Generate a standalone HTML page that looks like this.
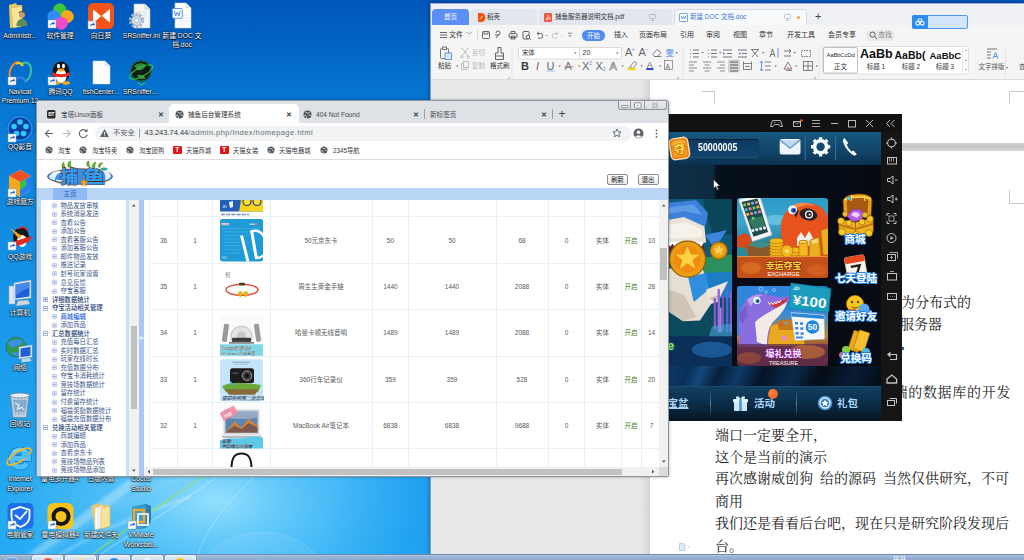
<!DOCTYPE html>
<html><head><meta charset="utf-8">
<style>
*{box-sizing:border-box;margin:0;padding:0}
html,body{width:1024px;height:560px;overflow:hidden}
body{position:relative;font-family:"Liberation Sans","Noto Sans CJK SC",sans-serif;background:#1a7fdc}
.abs{position:absolute}
svg{display:block;overflow:visible}
#desk{position:absolute;left:0;top:0;width:1024px;height:560px;overflow:hidden;
background:linear-gradient(180deg,#0056ba 0px,#0676d2 100px,#0f88de 200px,#1896e8 310px,#21a4f0 430px,#27acf3 560px);}
.ico{position:absolute;width:60px;margin-left:-30px;text-align:center;color:#fff;font-size:6.8px;line-height:9.6px;text-shadow:0 0 1.5px #000,0 .5px 1px rgba(0,0,0,.9),0 0 2px rgba(0,0,0,.6);white-space:nowrap}
.mi{top:25px;line-height:12px;font-size:7px;color:#333;white-space:nowrap}
.rt{line-height:10px;font-size:6.5px;color:#333;white-space:nowrap}
.doc{font-family:"Liberation Serif","Noto Serif CJK SC",serif;font-size:14px;line-height:20px;color:#222;white-space:nowrap;letter-spacing:0px;word-spacing:3.5px}
.gb{font-size:10.5px;font-weight:bold;color:#a9d6f7;line-height:14px;white-space:nowrap}
.tb{font-size:6.6px;line-height:12px;color:#45494e;white-space:nowrap}
.tx{font-size:6.5px;line-height:12px;color:#3c4043;font-weight:bold;width:8px;text-align:center}
.bm{font-size:6.3px;line-height:12px;color:#3c4043;white-space:nowrap}
.nv{font-size:6.35px;line-height:10px;white-space:nowrap}
.td{font-size:6.5px;line-height:10px;white-space:nowrap}
.c{transform:translateX(-50%)}
</style></head><body>
<div id="desk">
<svg class="abs" style="left:0;top:0" width="1024" height="560" viewBox="0 0 1024 560">
 <defs><radialGradient id="glow" cx="50%" cy="50%" r="50%"><stop offset="0" stop-color="#b0eeff" stop-opacity=".8"/><stop offset=".5" stop-color="#84daff" stop-opacity=".45"/><stop offset="1" stop-color="#7fd8ff" stop-opacity="0"/></radialGradient>
 <radialGradient id="glow2" cx="50%" cy="50%" r="50%"><stop offset="0" stop-color="#0f86ea" stop-opacity=".3"/><stop offset="1" stop-color="#0f86ea" stop-opacity="0"/></radialGradient></defs>
 <ellipse cx="215" cy="500" rx="210" ry="120" fill="url(#glow)"/>
 <ellipse cx="440" cy="530" rx="120" ry="90" fill="url(#glow2)"/>
 <circle cx="262" cy="610" r="78" fill="#ffffff" opacity=".07"/><circle cx="262" cy="610" r="78" fill="none" stroke="#fff" stroke-width="1" opacity=".12"/>
 <defs><filter id="bl" x="-20%" y="-20%" width="140%" height="140%"><feGaussianBlur stdDeviation="1.600"/></filter></defs>
 <g filter="url(#bl)"><path d="M20 560L32 560 140 484 128 480z" fill="#fff" opacity=".3"/><path d="M40 560C80 520 140 490 200 470" stroke="#ffffff" stroke-width="9" fill="none" opacity=".07"/>
 <path d="M52 560C90 535 135 515 190 497" stroke="#fff" stroke-width="2" fill="none" opacity=".4"/></g>
 <path d="M85 560C108 543 152 510 202 477" stroke="#8fdc5a" stroke-width="1.300" fill="none" opacity=".85"/>
 <path d="M92 560C130 533 175 508 218 476" stroke="#e8f8ff" stroke-width="1.200" fill="none" opacity=".35"/>
 <path d="M196 560C205 530 228 500 258 474" stroke="#d8f4ff" stroke-width="1.200" fill="none" opacity=".3"/>
</svg>
<svg class="abs" style="left:0;top:0" width="200" height="100" viewBox="0 0 200 100">
<path d="M9 5l7-2 1 2h5v21l-12 2z" fill="#e9c769"/><path d="M11 8l11-2v20l-9 2z" fill="#f7e39a" stroke="#d4ad48" stroke-width=".5"/><circle cx="22" cy="15" r="3" fill="#c99a6a"/><path d="M16.500 26c0-5 2.500-7 5.500-7s5.500 2 5.500 7z" fill="#5f8a5a"/><path d="M19 13c1-2 5-2 6 0" stroke="#6a4a2a" stroke-width="1.200" fill="none"/>
<g><rect x="53.500" y="3.500" width="12.500" height="12.500" rx="5.500" fill="#3fc83a" transform="rotate(45 59.800 9.800)"/><rect x="61" y="10.300" width="12.500" height="12.500" rx="5.500" fill="#f7a81e" transform="rotate(45 67.300 16.600)"/><rect x="47.500" y="10.300" width="12.500" height="12.500" rx="5.500" fill="#2f8cf4" transform="rotate(45 53.800 16.600)"/><rect x="55" y="17" width="12.500" height="12.500" rx="5.500" fill="#f04ac8" transform="rotate(45 61.300 23.300)"/></g><g transform="translate(48,20)"><rect x="0" y="0" width="8" height="8" fill="#fff" stroke="#7f9fc8" stroke-width=".5"/><path d="M2 6c0-2.500 1.500-3.500 3.500-3.500V1.200L7 3.200 5.500 5.200V4C4 4 3 4.500 2 6z" fill="#2a5fc8"/></g>
<rect x="88" y="3" width="26" height="26" rx="5" fill="#f2541b"/><path d="M93 9l8.500 7-8.500 7zM110 9l-8.500 7 8.500 7z" fill="#fff"/><path d="M93 9l17 14" stroke="#f2541b" stroke-width=".8"/><g transform="translate(88,21)"><rect x="0" y="0" width="8" height="8" fill="#fff" stroke="#7f9fc8" stroke-width=".5"/><path d="M2 6c0-2.500 1.500-3.500 3.500-3.500V1.200L7 3.200 5.500 5.200V4C4 4 3 4.500 2 6z" fill="#2a5fc8"/></g>
<path d="M134 4h11l5 5v19h-16z" fill="#f4f6f8" stroke="#b8c0c8" stroke-width=".6"/><path d="M145 4v5h5" fill="#dfe4ea" stroke="#b8c0c8" stroke-width=".5"/><path d="M137 12h10M137 15h10M137 18h10" stroke="#d0d6dc" stroke-width=".7"/><circle cx="136.500" cy="20.500" r="6.300" fill="none" stroke="#a8b6c6" stroke-width="2.800" stroke-dasharray="2.400 1.560"/><circle cx="136.500" cy="20.500" r="5" fill="#d4dde8" stroke="#93a3b6" stroke-width=".8"/><circle cx="136.500" cy="20.500" r="2.200" fill="#f4f6f8" stroke="#93a3b6" stroke-width=".6"/>
<path d="M175 3h11l5 5v20h-16z" fill="#fdfdfd" stroke="#c8ccd2" stroke-width=".6"/><path d="M186 3v5h5" fill="#e4e7ec" stroke="#c8ccd2" stroke-width=".5"/><path d="M178 15h10M178 18h10M178 21h10M178 24h7" stroke="#d8dce2" stroke-width=".7"/><rect x="172.300" y="8.500" width="10" height="9.800" rx="1.200" fill="#fff" stroke="#4a8af0" stroke-width=".9"/><path d="M174.300 11l1.400 5 1.600-4 1.600 4 1.400-5" stroke="#4a8af0" stroke-width="1" fill="none"/>
<path d="M14 82c-6-2-6-12 0-18 3-3 7-2 7 2" stroke="#f08a2a" stroke-width="2" fill="none"/><path d="M21 66c2-6 10-4 10 4 0 6-3 10-6 12" stroke="#3ac0a0" stroke-width="2" fill="none"/><path d="M13 82c4-6 10-6 13 0" stroke="#3a7fe0" stroke-width="2" fill="none"/><path d="M16 64c3-2 6-1 7 2" stroke="#e8d020" stroke-width="2" fill="none"/><g transform="translate(8,77)"><rect x="0" y="0" width="8" height="8" fill="#fff" stroke="#7f9fc8" stroke-width=".5"/><path d="M2 6c0-2.500 1.500-3.500 3.500-3.500V1.200L7 3.200 5.500 5.200V4C4 4 3 4.500 2 6z" fill="#2a5fc8"/></g>
<ellipse cx="61" cy="72" rx="8.500" ry="10.500" fill="#141414"/><ellipse cx="61" cy="76" rx="5.500" ry="7" fill="#fff"/><ellipse cx="58.500" cy="66" rx="1.500" ry="2.200" fill="#fff"/><ellipse cx="63.500" cy="66" rx="1.500" ry="2.200" fill="#fff"/><ellipse cx="61" cy="70" rx="3.500" ry="1.400" fill="#f5a81c"/><path d="M53 72c4 3 12 3 16 0l1 3c-5 3-13 3-18 0z" fill="#e8261c"/><ellipse cx="56" cy="83" rx="4" ry="1.800" fill="#f5a81c"/><ellipse cx="66" cy="83" rx="4" ry="1.800" fill="#f5a81c"/><g transform="translate(48,77)"><rect x="0" y="0" width="8" height="8" fill="#fff" stroke="#7f9fc8" stroke-width=".5"/><path d="M2 6c0-2.500 1.500-3.500 3.500-3.500V1.200L7 3.200 5.500 5.200V4C4 4 3 4.500 2 6z" fill="#2a5fc8"/></g>
<path d="M93 61h12l5 5v18H93z" fill="#fdfdfd" stroke="#cfd4da" stroke-width=".5"/><path d="M105 61v5h5" fill="#e8ebef" stroke="#cfd4da" stroke-width=".5"/>
<circle cx="141" cy="71" r="10.500" fill="#0e1c12"/><circle cx="141" cy="71" r="10" fill="none" stroke="#2a6a34" stroke-width="1"/><path d="M134 66c3-3 8-4 12-1-1 4-5 6-8 5zM137 75c3-1 7 0 9 3-3 2-7 2-9-3z" fill="#2f8a3a"/><ellipse cx="141" cy="72" rx="13" ry="4.500" fill="none" stroke="#34c844" stroke-width="1" transform="rotate(-28 141 72)"/><path d="M138 82l3 3 4-2" stroke="#3ad04a" stroke-width="1" fill="none"/>
</svg>
<div class="ico" style="left:20px;top:30.7px">Administr...</div>
<div class="ico" style="left:60px;top:30.7px">软件管理</div>
<div class="ico" style="left:101px;top:30.7px">向日葵</div>
<div class="ico" style="left:141.5px;top:30.7px">SRSniffer.ini</div>
<div class="ico" style="left:182px;top:30.7px">新建 DOC 文</div>
<div class="ico" style="left:182px;top:40.3px">档.doc</div>
<div class="ico" style="left:20px;top:86.5px">Navicat</div>
<div class="ico" style="left:20px;top:96.1px">Premium 12</div>
<div class="ico" style="left:60.5px;top:86.5px">腾讯QQ</div>
<div class="ico" style="left:101px;top:86.5px">fishCenter...</div>
<div class="ico" style="left:141px;top:86.5px">SRSniffer....</div>
<svg class="abs" style="left:0;top:100px" width="40" height="440" viewBox="0 0 40 440">
<circle cx="20" cy="28.500" r="13.500" fill="#1c8ff0" stroke="#0a5fc0" stroke-width="1"/><circle cx="20" cy="28.500" r="11" fill="#0a3f9a"/><g fill="#2ec8ff"><circle cx="20" cy="22" r="2.800"/><circle cx="14" cy="26.500" r="2.800"/><circle cx="26" cy="26.500" r="2.800"/><circle cx="16.500" cy="33.500" r="2.800"/><circle cx="23.500" cy="33.500" r="2.800"/></g><g transform="translate(8,34)"><rect x="0" y="0" width="8" height="8" fill="#fff" stroke="#7f9fc8" stroke-width=".5"/><path d="M2 6c0-2.500 1.500-3.500 3.500-3.500V1.200L7 3.200 5.500 5.200V4C4 4 3 4.500 2 6z" fill="#2a5fc8"/></g>
<path d="M20 70l11 6v14l-11 7-11-7V76z" fill="#f5f5f5"/><path d="M20 70l11 6-11 6-11-6z" fill="#f0501e"/><path d="M9 76l11 6v15l-11-7z" fill="#f5a81c"/><path d="M31 76l-11 6v15l11-7z" fill="#2a7fe8"/><path d="M20 82l6-3v7l-6 4z" fill="#3ac04a"/><g transform="translate(8,89)"><rect x="0" y="0" width="8" height="8" fill="#fff" stroke="#7f9fc8" stroke-width=".5"/><path d="M2 6c0-2.500 1.500-3.500 3.500-3.500V1.200L7 3.200 5.500 5.200V4C4 4 3 4.500 2 6z" fill="#2a5fc8"/></g>
<ellipse cx="21" cy="137" rx="8" ry="9.500" fill="#161616"/><ellipse cx="22" cy="141" rx="5" ry="6" fill="#fff"/><path d="M10 128l12 8-3 3z" fill="#f5a81c"/><path d="M12 142l20-6-2 5-12 5z" fill="#e8261c"/><path d="M18 129c4-3 8-2 10 2" stroke="#e8261c" stroke-width="1.500" fill="none"/><g transform="translate(8,142)"><rect x="0" y="0" width="8" height="8" fill="#fff" stroke="#7f9fc8" stroke-width=".5"/><path d="M2 6c0-2.500 1.500-3.500 3.500-3.500V1.200L7 3.200 5.500 5.200V4C4 4 3 4.500 2 6z" fill="#2a5fc8"/></g>
<rect x="9" y="186" width="6" height="18" fill="#dfe5ec" stroke="#9aa6b4" stroke-width=".5"/><path d="M14 183l17-3v18l-17 2z" fill="#e8edf3" stroke="#9aa6b4" stroke-width=".5"/><path d="M15.500 184.500l14-2.500v14.500l-14 2z" fill="#1f5fd8"/><path d="M15.500 184.500l14-2.500v6c-5 1-10 4-14 8z" fill="#5a9af0" opacity=".7"/><path d="M18 201l10-1 2 4-14 2z" fill="#cfd6de" stroke="#9aa6b4" stroke-width=".5"/>
<circle cx="16" cy="247" r="10" fill="#2f9a4a"/><path d="M8 243c4-4 10-5 15-2-2 5-8 7-12 6zM12 253c3-2 8-1 10 2-3 2-8 2-10-2z" fill="#3a8fe0"/><circle cx="16" cy="247" r="10" fill="none" stroke="#1f6a8a" stroke-width=".8"/><path d="M19 247l13-2v12l-13 2z" fill="#e8edf3" stroke="#9aa6b4" stroke-width=".5"/><path d="M20.500 248.500l10-1.800v9l-10 1.600z" fill="#1f5fd8"/><path d="M22 259l8-1 1.500 3-10 1.500z" fill="#cfd6de"/>
<path d="M10.500 296h18.500l-2.500 21.500h-13.500z" fill="#c9d6e2" stroke="#6f8296" stroke-width=".8" opacity=".95"/><path d="M13 300h14l-1.500 12h-11z" fill="#5a8fd0" opacity=".55"/><path d="M14.500 299l1.300 16M18 299l.5 16M21.500 299l-.5 16M25 299l-1.300 16" stroke="#8a9cb0" stroke-width=".8"/><ellipse cx="19.800" cy="295.500" rx="9.800" ry="2.400" fill="#e8eef4" stroke="#6f8296" stroke-width=".8"/><path d="M15 303l4 2-1.500 4 4.500-1.500 2.500 3" stroke="#fff" stroke-width="1.100" fill="none" opacity=".85"/>
<path d="M26.960 363.400A8.500 8.500 0 1 1 28.500 358.500H12" fill="none" stroke="#1670cc" stroke-width="6.600"/><path d="M26.960 363.400A8.500 8.500 0 1 1 28.500 358.500H12" fill="none" stroke="#4fc0fb" stroke-width="5.200"/><path d="M13 352.500a8.500 8.500 0 0 1 12-1" fill="none" stroke="#8fdcff" stroke-width="2" opacity=".8"/><ellipse cx="19" cy="356.500" rx="13.500" ry="5" fill="none" stroke="#f5b820" stroke-width="1.800" transform="rotate(-32 19 356.500)"/><path d="M22 353.500A8.500 8.500 0 0 1 28.500 358.500" fill="none" stroke="#4fc0fb" stroke-width="5.200"/>
<rect x="7.500" y="403" width="26" height="26" rx="5" fill="#1f6fe8"/><path d="M20.500 407l9 3v7c0 5-4 8-9 10-5-2-9-5-9-10v-7z" fill="none" stroke="#fff" stroke-width="1.800"/><path d="M15 415l5 4 7-8" stroke="#fff" stroke-width="1.800" fill="none"/><g transform="translate(8,421)"><rect x="0" y="0" width="8" height="8" fill="#fff" stroke="#7f9fc8" stroke-width=".5"/><path d="M2 6c0-2.500 1.500-3.500 3.500-3.500V1.200L7 3.200 5.500 5.200V4C4 4 3 4.500 2 6z" fill="#2a5fc8"/></g>
</svg>
<div class="ico" style="left:20px;top:141.7px">QQ影音</div>
<div class="ico" style="left:20px;top:197.2px">游戏魔方</div>
<div class="ico" style="left:20px;top:252.2px">QQ游戏</div>
<div class="ico" style="left:20px;top:307.7px">计算机</div>
<div class="ico" style="left:20px;top:363.2px">网络</div>
<div class="ico" style="left:20px;top:419.2px">回收站</div>
<div class="ico" style="left:20px;top:474.2px">Internet</div>
<div class="ico" style="left:20px;top:483.8px">Explorer</div>
<div class="ico" style="left:20px;top:530.2px">电脑管家</div>
<div class="ico" style="left:60px;top:474.2px">雷电多开器4</div>
<div class="ico" style="left:101px;top:474.2px">日版内置</div>
<div class="ico" style="left:141px;top:474.2px">Cocos</div>
<div class="ico" style="left:141px;top:483.8px">Studio</div>
<svg class="abs" style="left:40px;top:495px" width="130" height="40" viewBox="0 0 130 40">
<rect x="7.500" y="8" width="26" height="26" rx="6" fill="#f7c21a"/><circle cx="21" cy="21.500" r="7.500" fill="none" stroke="#161616" stroke-width="4"/><path d="M22.500 17l-4 5h3l-1.500 4.500 4.500-5.500h-3z" fill="#f7c21a"/><path d="M10 31l7-6" stroke="#161616" stroke-width="3.600"/><g transform="translate(8,26)"><rect x="0" y="0" width="8" height="8" fill="#fff" stroke="#7f9fc8" stroke-width=".5"/><path d="M2 6c0-2.500 1.500-3.500 3.500-3.500V1.200L7 3.200 5.500 5.200V4C4 4 3 4.500 2 6z" fill="#2a5fc8"/></g>
<path d="M51 11l8-3 2 2h8v22l-14 3z" fill="#e9c769"/><path d="M55 13l5-1v21l-5 2z" fill="#fbfbfb" stroke="#ccc" stroke-width=".4"/><path d="M58 12l5-1v21l-5 2z" fill="#f4f4f4" stroke="#ccc" stroke-width=".4"/><path d="M61 13l9-2v20l-9 3z" fill="#f7e39a" stroke="#d4ad48" stroke-width=".5"/>
<path d="M92 12l14-3 5 2v16l-5 6-14 2z" fill="#2a7fb8"/><path d="M92 12l14-2v22l-14 3z" fill="#3a9ad8"/><rect x="94" y="15" width="10" height="12" fill="none" stroke="#f5a81c" stroke-width="2.400"/><rect x="98" y="19" width="10" height="11" fill="none" stroke="#e8e8e8" stroke-width="2"/><g transform="translate(88,26)"><rect x="0" y="0" width="8" height="8" fill="#fff" stroke="#7f9fc8" stroke-width=".5"/><path d="M2 6c0-2.500 1.500-3.500 3.500-3.500V1.200L7 3.200 5.500 5.200V4C4 4 3 4.500 2 6z" fill="#2a5fc8"/></g>
</svg>
<div class="ico" style="left:60.5px;top:530.2px">雷电模拟器4</div>
<div class="ico" style="left:101px;top:530.2px">新建文件夹</div>
<div class="ico" style="left:141px;top:530.2px">VMware</div>
<div class="ico" style="left:141px;top:539.8px">Workstati...</div>
</div>
<div id="wps" class="abs" style="left:430px;top:3px;width:594px;height:551px;background:#f4f5f6;border-left:1px solid #8aa0c8;border-top:1px solid #9fb4d8;box-shadow:0 0 4px rgba(0,10,60,.55);overflow:hidden;font-size:7.3px;color:#333">
 <!-- title/tab bar -->
 <div class="abs" style="left:0;top:0;width:594px;height:21px;background:#eef0f3"></div>
 <div class="abs" style="left:1px;top:5px;width:37px;height:16px;background:#5b8ff5;border-radius:4px 4px 0 0;color:#fff;text-align:center;line-height:16px;font-size:6.5px">首页</div>
 <div class="abs" style="left:40px;top:5px;width:66px;height:16px;background:#e2e6ee;border-radius:4px 4px 0 0"></div>
 <svg class="abs" style="left:46px;top:9px" width="8" height="9" viewBox="0 0 8 9"><path d="M1 0h3.5a3.5 4 0 0 1 0 9H1z" fill="#f4510b"/><path d="M2.6 6.2c1-.2 2.2-1.6 2.3-3" stroke="#fff" stroke-width=".9" fill="none"/></svg>
 <div class="abs" style="left:56px;top:5px;line-height:16px;font-size:6.5px;color:#333">稻壳</div>
 <div class="abs" style="left:108px;top:5px;width:133px;height:16px;background:#e2e6ee;border-radius:4px 4px 0 0"></div>
 <div class="abs" style="left:113px;top:9px;width:8px;height:9px;background:#f0593e;border-radius:1px"></div>
 <svg class="abs" style="left:114px;top:10px" width="6" height="7" viewBox="0 0 6 7"><path d="M1 6c1-1 2-3 2-5 1 2 1.5 3 2.5 3.5C4 4.8 2 5.2 1 6z" stroke="#fff" stroke-width=".7" fill="none"/></svg>
 <div class="abs" style="left:124px;top:5px;line-height:16px;font-size:6.5px;color:#333">捕鱼服务器说明文档.pdf</div>
 <svg class="abs" style="left:218px;top:10px" width="7" height="7" viewBox="0 0 7 7"><rect x=".5" y=".5" width="6" height="4" rx="1" fill="none" stroke="#aab" stroke-width=".7"/><path d="M3.5 4.5v2M2 6.5h3" stroke="#aab" stroke-width=".7"/></svg>
 <div class="abs" style="left:243px;top:5px;width:133px;height:17px;background:#f8f9fa;border-radius:4px 4px 0 0;border:1px solid #d5d9e2;border-bottom:none"></div>
 <svg class="abs" style="left:248px;top:9px" width="9" height="9" viewBox="0 0 9 9"><rect x=".5" y=".5" width="8" height="8" rx="1" fill="#fff" stroke="#4a86e8" stroke-width=".8"/><path d="M2.3 3l.9 3 1.3-2.6L5.8 6l.9-3" stroke="#4a86e8" stroke-width=".8" fill="none"/></svg>
 <div class="abs" style="left:259px;top:5px;line-height:16px;font-size:6.5px;color:#3c78d8">新建 DOC 文档.doc</div>
 <svg class="abs" style="left:353px;top:10px" width="7" height="7" viewBox="0 0 7 7"><rect x=".5" y=".5" width="6" height="4" rx="1" fill="none" stroke="#aab" stroke-width=".7"/><path d="M3.5 4.5v2M2 6.5h3" stroke="#aab" stroke-width=".7"/></svg>
 <div class="abs" style="left:366px;top:12px;width:3px;height:3px;border-radius:2px;background:#f5a142"></div>
 <div class="abs" style="left:384px;top:4px;line-height:16px;font-size:11px;color:#444">+</div>
 <!-- menu row -->
 <div class="abs" style="left:0;top:21px;width:594px;height:55px;background:#f5f5f6"></div>
 <svg class="abs" style="left:9px;top:28px" width="7" height="6" viewBox="0 0 7 6"><path d="M0 .5h7M0 3h7M0 5.500h7" stroke="#444" stroke-width=".8"/></svg><div class="abs mi" style="left:18px">文件</div><div class="abs mi" style="left:35px;font-size:6px;color:#777">﹀</div>
 <div class="abs" style="left:46px;top:25px;width:1px;height:12px;background:#ddd"></div>
 <svg class="abs" style="left:50px;top:26px" width="100" height="11" viewBox="0 0 100 11" fill="none" stroke="#555" stroke-width=".9">
  <rect x="1.5" y="1.5" width="7" height="7" rx="1"/><path d="M3 1.5v2.5h4V1.5"/>
  <path d="M15 8l2-3a2 2 0 1 0-2-2M14 5h4"/>
  <rect x="28" y="3.5" width="8" height="4" rx="1.5"/><path d="M30 3.500V1.500h4v2M30 6h4v3h-4z"/>
  <rect x="42" y="1.500" width="6" height="7.500" rx=".8"/><circle cx="47" cy="7" r="1.800" fill="#f5f5f6"/><path d="M48.300 8.300l1.500 1.500"/>
  <path d="M56 3.500h3.500a2.300 2.300 0 0 1 0 4.600H57M57.800 1.800L56 3.500l1.800 1.700"/><path d="M64.500 5l1 1 1-1" stroke-width=".6"/>
  <path d="M77 3.500h-3.500a2.300 2.300 0 0 0 0 4.600H76M75.200 1.800L77 3.500l-1.800 1.700" stroke="#bbb"/><path d="M80.500 5l1 1 1-1" stroke-width=".6" stroke="#bbb"/>
  <path d="M87 3.200h4M87.700 5l1.300 1.500L90.300 5" stroke-width=".7"/>
 </svg>
 <div class="abs" style="left:151px;top:26px;width:23px;height:11px;background:#4e8af0;border-radius:6px;color:#fff;text-align:center;line-height:11px;font-size:6.5px">开始</div>
 <div class="abs mi c" style="left:190px">插入</div><div class="abs mi c" style="left:222px">页面布局</div><div class="abs mi c" style="left:256px">引用</div><div class="abs mi c" style="left:282px">审阅</div><div class="abs mi c" style="left:309px">视图</div><div class="abs mi c" style="left:335px">章节</div><div class="abs mi c" style="left:370px">开发工具</div><div class="abs mi c" style="left:411px">会员专享</div>
 <div class="abs" style="left:435px;top:26px;width:28px;height:11px;background:#e8e9ea;border-radius:6px"></div>
 <svg class="abs" style="left:438px;top:27px" width="9" height="9" viewBox="0 0 9 9"><circle cx="3.600" cy="3.600" r="2.600" fill="none" stroke="#555" stroke-width=".9"/><path d="M5.600 5.600l2.400 2.400" stroke="#555" stroke-width="1"/></svg>
 <div class="abs mi" style="left:447px;color:#888">查找</div>

 <!-- cloud button -->
 <div class="abs" style="left:481px;top:11px;width:56px;height:14px;background:#d2e5fb;border:1px solid #4a9af0;border-radius:2px"></div>
 <div class="abs" style="left:481px;top:11px;width:16px;height:14px;background:#2d8cf0;border-radius:2px 0 0 2px"></div>
 <svg class="abs" style="left:484px;top:14px" width="10" height="8" viewBox="0 0 10 8"><circle cx="5" cy="2.600" r="1.900" fill="none" stroke="#fff" stroke-width="1.100"/><circle cx="2.800" cy="5.200" r="1.900" fill="none" stroke="#fff" stroke-width="1.100"/><circle cx="7.200" cy="5.200" r="1.900" fill="none" stroke="#fff" stroke-width="1.100"/></svg>
 <!-- ribbon -->
 <svg class="abs" style="left:0;top:40px" width="594" height="38" viewBox="0 0 594 38" fill="none" stroke="#555" stroke-width=".9">
  <!-- paste -->
  <rect x="9.500" y="4.500" width="8" height="10" rx="1" stroke="#666"/><rect x="11.500" y="3" width="4" height="2.500" fill="#f5f5f6" stroke="#666"/><rect x="14" y="9" width="6.500" height="6.500" fill="#dbe8fb" stroke="#5b8fd8"/>
  <!-- scissors -->
  <path d="M31 4l6 8M37 4l-6 8" stroke="#bbb"/><circle cx="30.800" cy="13" r="1.200" stroke="#bbb"/><circle cx="37.200" cy="13" r="1.200" stroke="#bbb"/>
  <!-- copy -->
  <rect x="30.500" y="19.500" width="5" height="6" stroke="#bbb"/><rect x="32.500" y="17.500" width="5" height="6" stroke="#bbb" fill="#f5f5f6"/>
  <!-- format brush -->
  <path d="M67 3.500h3v5.500h2.500v3h-8v-3H67zM64.500 12v3.500h8V12" stroke="#555"/>
  <path d="M81 4v30" stroke="#e2e2e2"/>
  <!-- font boxes -->
  <rect x="87.500" y="3.500" width="61" height="11.500" rx="1.500" fill="#fff" stroke="#d6d6d6"/><rect x="148.500" y="3.500" width="42" height="11.500" rx="1.500" fill="#fff" stroke="#d6d6d6"/>
  <path d="M143 8.500l1.300 1.500 1.300-1.500zM185 8.500l1.300 1.500 1.300-1.500z" fill="#666" stroke="none"/>
  <!-- eraser -->
  <path d="M221.500 10.500l4.500-5 4 3-3.500 4h-3zM223.500 12.500h7" stroke="#666" stroke-width=".8"/>
  <g transform="translate(0,-5)">
  <!-- underline bits -->
  <path d="M115.500 32h8" stroke="#8fb4ee"/><path d="M133 27.800h9.500" stroke="#e05a5a" stroke-width=".7"/>
  <!-- highlight -->
  <path d="M199 27.500l4.500-5 2.500 2-4.500 5zM197.500 29h3" stroke="#666" stroke-width=".8"/><rect x="196.400" y="28.800" width="8.300" height="2.400" fill="#ecd91a" stroke="none"/>
  <rect x="215.300" y="29.100" width="7.200" height="1.900" fill="#2a3bd6" stroke="none"/>
  <rect x="233.500" y="21.500" width="8" height="9" stroke="#777" stroke-width=".7"/>
  </g>
  <path d="M252 4v30" stroke="#e2e2e2"/>
  <path d="M78.500 32.500v2.500h-2.500M247.500 32.500v2.500h-2.500M384.500 32.500v2.500h-2.500" stroke="#999" stroke-width=".6"/>
  <!-- list icons row1 -->
  <g stroke="#555" stroke-width=".8">
   <path d="M262 6h6M262 9.500h6M262 13h6"/><path d="M259 6h1M259 9.500h1M259 13h1" stroke="#4a86e8" stroke-width="1.200"/>
   <path d="M280 6h6M280 9.500h6M280 13h6"/><path d="M277 6h1M277 9.500h1M277 13h1" stroke="#4a86e8" stroke-width="1.200"/>
   <path d="M292 6h9M296 9.500h5M292 13h9"/><path d="M292 8l2 1.500-2 1.500z" fill="#4a86e8" stroke="none"/>
   <path d="M307 6h9M311 9.500h5M307 13h9"/><path d="M309.500 8l-2 1.500 2 1.500z" fill="#4a86e8" stroke="none"/>
   <path d="M321 13l6-7M327 13l-6-7M320 5.500h8"/>
   <path d="M339 13l2.500-8 2.500 8M340 10.500h3"/><path d="M347 4v10" stroke="#4a86e8"/>
   <path d="M353 7h7M358 5l2 2-2 2M360 12h-7"/>
   <rect x="370.500" y="6.500" width="9" height="6" stroke-dasharray="1.500 1"/>
   </g><g stroke="#666" stroke-width=".7" transform="translate(0,-5)">
   <!-- row2 align -->
   <path d="M258 23h8M258 26h5M258 29h8M258 32h5"/>
   <path d="M272 23h8M273.500 26h5M272 29h8M273.500 32h5"/>
   <path d="M286 23h8M289 26h5M286 29h8M289 32h5"/>
  </g>
  <rect x="297" y="15.500" width="12" height="13" rx="1.500" fill="#d4d4d4" stroke="none"/>
  <g stroke="#444" stroke-width=".8" transform="translate(0,-5)"><path d="M299 23h8M299 26h8M299 29h8M299 32h8"/></g>
  <g stroke="#666" stroke-width=".8" transform="translate(0,-5)"><rect x="312.500" y="24.500" width="8" height="6"/><path d="M312.500 22.500v2M320.500 22.500v2M314 27.500h5"/>
   <path d="M334 23h6M334 27h6M334 31h6"/><path d="M330.500 22v10M329 24l1.500-2 1.500 2M329 30l1.500 2 1.500-2" stroke="#4a86e8"/>
   <path d="M353 30l4-7 4 7zM355 31.500h6" /><path d="M356 27.500l3 3" stroke="#d33"/>
   <rect x="372.500" y="22.500" width="9" height="9"/><path d="M377 22.500v9M372.500 27h9"/>
  </g>
  <g fill="#666" stroke="none"><path d="M270.500 8l1.200 1.400 1.200-1.400zM288 8l1.200 1.400 1.200-1.400zM331 8l1.200 1.400 1.200-1.400zM362.500 8l1.200 1.400 1.200-1.400zM343.500 21.500l1.200 1.400 1.200-1.400zM364 21.500l1.200 1.400 1.200-1.400zM384.500 21.500l1.200 1.400 1.200-1.400zM25 21.500l1.200 1.400 1.200-1.400zM244.500 8l1.200 1.400 1.200-1.400zM127.500 21.500l1.200 1.400 1.200-1.400zM147 21.500l1.200 1.400 1.200-1.400zM190.500 21.500l1.200 1.400 1.200-1.400zM209.500 21.500l1.200 1.400 1.200-1.400zM228 21.500l1.200 1.400 1.200-1.400z"/></g>
  <path d="M388 4v30" stroke="#e2e2e2"/>
  <!-- styles -->
  <rect x="391.500" y="2.500" width="146" height="27.500" rx="1.500" fill="#fff" stroke="#dcdcdc"/>
  <rect x="392.500" y="3.500" width="34" height="25.500" rx="1.500" fill="#fff" stroke="#b9b9b9"/>
  <path d="M534 7l1 -1.200 1 1.200zM534 16l1 1.200 1-1.200zM534 25l1 1.200 1-1.200z" fill="#777" stroke="none"/>
  <path d="M531.500 3v26" stroke="#e6e6e6"/>
  <!-- text layout icon -->
  <path d="M556 5h10M556 8h4M556 11h4M556 14h4" stroke="#666"/><path d="M562 14.500l2.500-6 2.500 6M563 12.500h3" stroke="#4a86e8"/>
 </svg>
 <div class="abs rt" style="left:7px;top:57px">粘贴</div>
 <div class="abs rt" style="left:41px;top:43.500px;color:#b5b5b5">剪切</div>
 <div class="abs rt" style="left:41px;top:57px;color:#b5b5b5">复制</div>
 <div class="abs rt" style="left:59px;top:57px">格式刷</div>
 <div class="abs rt" style="left:91px;top:43.500px;font-size:6.300px">宋体</div>
 <div class="abs rt" style="left:151.500px;top:43.500px;font-size:7px">20</div>
 <div class="abs rt" style="left:194px;top:43.400px;font-size:11px;color:#666">A<span style="font-size:5px;position:relative;top:-5.500px;left:-.5px;color:#4a86e8">+</span></div>
 <div class="abs rt" style="left:207.500px;top:43.400px;font-size:11px;color:#666">A<span style="font-size:5px;position:relative;top:-5.500px;left:-.5px;color:#4a86e8">–</span></div>
 <div class="abs rt" style="left:234.500px;top:43.500px;font-size:8.500px;color:#4a86e8">雯</div>
 <div class="abs rt" style="left:90px;top:57.200px;font-size:11px;font-weight:bold;color:#3a3a3a">B</div>
 <div class="abs rt" style="left:105px;top:57.200px;font-size:11px;font-style:italic;color:#666">I</div>
 <div class="abs rt" style="left:115.500px;top:57.200px;font-size:11px;color:#666">U</div>
 <div class="abs rt" style="left:133.500px;top:57.200px;font-size:11px;color:#777">A</div>
 <div class="abs rt" style="left:151px;top:57.200px;font-size:11px;color:#666">X<span style="font-size:5px;position:relative;top:-5px;color:#4a86e8">2</span></div>
 <div class="abs rt" style="left:164.500px;top:57.200px;font-size:11px;color:#666">X<span style="font-size:5px;position:relative;top:1px;color:#4a86e8">2</span></div>
 <div class="abs rt" style="left:178.500px;top:57.200px;font-size:11px;color:#f5f5f6;-webkit-text-stroke:.55px #666">A</div>
 <div class="abs rt" style="left:215.800px;top:56.200px;font-size:9px;color:#666">A</div>
 <div class="abs rt" style="left:234.500px;top:57.500px;font-size:6.500px;color:#666">A</div>
 <div class="abs rt c" style="left:409.500px;top:45.500px;font-size:6px;color:#333;letter-spacing:-.2px">AaBbCcDd</div>
 <div class="abs rt c" style="left:409.500px;top:57.500px">正文</div>
 <div class="abs rt" style="left:429px;top:43px;font-size:12.500px;font-weight:bold;color:#111;line-height:14px;width:32.500px;overflow:hidden">AaBb</div>
 <div class="abs rt c" style="left:445px;top:57.500px">标题 1</div>
 <div class="abs rt" style="left:463.500px;top:44px;font-size:10.500px;font-weight:bold;color:#111;line-height:14px;width:33px;overflow:hidden">AaBb(</div>
 <div class="abs rt c" style="left:480px;top:57.500px">标题 2</div>
 <div class="abs rt" style="left:498.500px;top:44.500px;font-size:9.500px;font-weight:bold;color:#111;line-height:14px;width:32px;overflow:hidden">AaBbC</div>
 <div class="abs rt c" style="left:514px;top:57.500px">标题 3</div>
 <div class="abs rt c" style="left:562px;top:57.500px;color:#555">文字排版<span style="font-size:4px;color:#777"> ▾</span></div>
 <div class="abs rt" style="left:588px;top:57.500px;color:#555">查</div>
 <div class="abs" style="left:574px;top:44px;width:1px;height:30px;background:#e4e4e4"></div>
 <!-- doc area -->
 <div class="abs" style="left:0;top:75px;width:594px;height:476px;background:#e9e9e9;border-top:1px solid #dadada"></div>
 <div class="abs" style="left:209px;top:76px;width:11px;height:475px;background:linear-gradient(90deg,#e9e9e9,#d2d2d2)"></div>
 <div class="abs" style="left:219px;top:76px;width:375px;height:475px;background:#fff"></div>
 <div class="abs" style="left:471px;top:139px;width:123px;height:8px;background:linear-gradient(180deg,#d4d4d4,#c6c6c6 50%,#d9d9d9)"></div>
 <svg class="abs" style="left:219px;top:76px" width="375" height="130" viewBox="0 0 375 130" fill="none" stroke="#c9c9c9" stroke-width="1"><path d="M52 11.500h12.500v12M375 11.500h-15.500v12M359.500 110v13.500h16"/></svg>
 <div class="abs doc" style="left:470px;top:289px">为分布式的</div>
 <div class="abs doc" style="left:469px;top:310.5px">服务器</div>
 <div class="abs" style="left:471px;top:343px;width:2px;height:3px;background:#335fc4"></div>
 <div class="abs doc" style="left:462.500px;top:379px;letter-spacing:.7px">端的数据库的开发</div>
 <div class="abs doc" style="left:284px;top:422px">端口一定要全开，</div>
 <div class="abs doc" style="left:284px;top:443.5px">这个是当前的演示</div>
 <div class="abs doc" style="left:284px;top:465px">再次感谢威创狗 给的源码 当然仅供研究，不可</div>
 <div class="abs doc" style="left:284px;top:487.5px">商用</div>
 <div class="abs doc" style="left:284px;top:510px">我们还是看看后台吧，现在只是研究阶段发现后</div>
 <div class="abs doc" style="left:284px;top:533px">台。</div>
 <svg class="abs" style="left:248px;top:539px" width="12" height="8" viewBox="0 0 12 8"><path d="M.5 .5h4l1.500 1.500v5.500h-5.500z" fill="#dfe9f8" stroke="#9bb6e0" stroke-width=".6"/><path d="M9 4h2" stroke="#aaa" stroke-width=".6"/></svg>

</div>
<div id="game" class="abs" style="left:669px;top:114px;width:233px;height:306.500px;background:#0a0f18;overflow:hidden">
 <!-- title bar -->
 <div class="abs" style="left:0;top:0;width:233px;height:18px;background:#121212"></div>
 <svg class="abs" style="left:100px;top:3px" width="133" height="13" viewBox="0 0 133 13" fill="none" stroke="#b8b8b8" stroke-width="1">
  <path d="M3.500 3.500h8l2 6h-2.500l-1.500-2h-4l-1.500 2H1.500z"/><path d="M5 5.500h1.500M9.500 5.500h.5" stroke-width=".8"/>
  <rect x="24.500" y="4.500" width="7" height="5"/><path d="M24.500 4.500l3.500 2.500 3.500-2.500" stroke-width=".7"/><circle cx="32.500" cy="3.500" r="1.300" fill="#ff5a1f" stroke="none"/>
  <path d="M43 3.500h8M43 6.500h8M43 9.500h8" stroke-width=".9"/>
  <path d="M62 6.500h7"/>
  <rect x="79.500" y="3.500" width="7" height="6.500"/>
  <path d="M97 3l7 7M104 3l-7 7"/>
  <path d="M121 3l-3.500 3.500 3.500 3.500M125.500 3l-3.500 3.500 3.500 3.500"/>
 </svg>
 <!-- sidebar -->
 <div class="abs" style="left:211.500px;top:18px;width:21.500px;height:289px;background:#151515"></div>
 <svg class="abs" style="left:212px;top:18px" width="21" height="288" viewBox="0 0 21 288" fill="none" stroke="#c4c4c4" stroke-width="1">
  <circle cx="10.500" cy="11" r="4"/><path d="M10.500 5.500v2M10.500 14.500v2M5 11h2M14 11h2" stroke-width="1.200"/>
  <rect x="6.500" y="25.500" width="9" height="6.500"/><path d="M8.500 25.500v4M10.500 25.500v4M12.500 25.500v4" stroke-width=".7"/>
  <path d="M6.500 46.500h2.500l3-2.500v8l-3-2.500h-2.500zM14 48h2.500"/>
  <path d="M6.500 65.500h2.500l3-2.500v8l-3-2.500h-2.500zM14 67h2.500M15.250 65.500v3"/>
  <path d="M6 84v-2.500h2.500M12.500 81.500h2.500v2.500M15 89v2.500h-2.500M8.500 91.500H6V89"/><rect x="8" y="84" width="5" height="5" stroke-width=".8"/>
  <circle cx="10.500" cy="106" r="4.500"/><path d="M9.500 104l3 2-3 2z" fill="#c4c4c4" stroke="none"/>
  <rect x="6.500" y="122.500" width="8" height="6"/><path d="M8.500 120.500h8v6M10.500 124v3M9 125.500h3" stroke-width=".8"/>
  <rect x="6.500" y="141.500" width="9" height="6.500"/><path d="M9 139.500h4" stroke-width=".8"/>
  <rect x="6.500" y="161.500" width="9" height="6"/><path d="M9 164.500h.5M11 164.500h.5M13 164.500h.5" stroke-width=".9"/>
  <path d="M7 222.500h8.500v5h-6.500" stroke-width="1.200"/><path d="M9.500 219.500l-3.500 3 3.500 3z" fill="#c4c4c4" stroke="none"/>
  <path d="M6 247l4.800-4 4.800 4v4h-9.600z" stroke-width="1.300"/>
  <rect x="6.500" y="268.500" width="7" height="5"/><path d="M8.500 266.500h7v5"/>
 </svg>
 <!-- game content -->
 <div class="abs" style="left:0;top:18px;width:211.500px;height:288.500px;background:#060b14;overflow:hidden">
  <!-- header bar -->
  <div class="abs" style="left:0;top:0;width:212px;height:33px;background:linear-gradient(180deg,#17577f 0%,#124669 55%,#0c3150 100%)"></div>
  <div class="abs" style="left:14px;top:6.500px;width:76px;height:18px;border-radius:3px;background:linear-gradient(180deg,#0d3a63,#14456f);box-shadow:inset 0 1px 1px rgba(0,0,0,.5),0 .5px 0 rgba(120,180,230,.35)"></div>
  <div class="abs" style="left:28.500px;top:8px;font-size:11.500px;font-weight:bold;color:#fff;line-height:14px;transform:scaleX(.77);transform-origin:0 50%">50000005</div>
  <svg class="abs" style="left:0;top:4px" width="22" height="25" viewBox="0 0 22 25"><g transform="rotate(-9 10.500 12.500)"><rect x="1.200" y="2" width="18.500" height="21" rx="4.500" fill="#e8701a" stroke="#f6e4ac" stroke-width="1.500"/><rect x="3" y="3.800" width="15" height="17.400" rx="3.300" fill="#f59a1c"/><ellipse cx="10.500" cy="8" rx="6.500" ry="3.500" fill="#fbc04a" opacity=".7"/><text x="10.500" y="17.300" text-anchor="middle" font-size="12" font-weight="bold" fill="#ffe64a" stroke="#b8400a" stroke-width=".9" paint-order="stroke" font-family="Liberation Sans, Noto Sans CJK SC, sans-serif">夺</text></g></svg>
  <svg class="abs" style="left:108px;top:4px" width="90" height="24" viewBox="0 0 90 24">
   <rect x="2.700" y="3" width="20.800" height="15.500" rx="2" fill="#eef5fd"/><path d="M3.200 4.200l9.900 8 9.900-8" stroke="#5f97d2" stroke-width="1.400" fill="#bfd9f4"/>
   <path d="M28.300 0v24M58.600 0v24" stroke="#2b6a99" stroke-width="1.200"/>
   <g transform="translate(43.600 10.800)"><circle r="6" fill="none" stroke="#f4f8fc" stroke-width="3.600"/><g stroke="#f4f8fc" stroke-width="3.400"><path d="M0 -9.600v2.600M0 9.600v-2.600M-9.600 0h2.600M9.600 0h-2.600M-6.800 -6.800l1.900 1.900M6.800 6.800l-1.900-1.900M-6.800 6.800l1.900-1.900M6.800 -6.800l-1.900 1.900"/></g></g>
   <path d="M67.500 2c-1.800 1.200-2 3-.8 5.800 1.800 4.200 5.300 8.600 8.800 11 1.600 1.100 3.100 .9 4.300-.5l-3.300-3.800-2 .9c-1.700-1.500-3.900-4.400-4.700-6.700l1.500-1.600z" fill="#f4f8fc"/>
  </svg>
  <!-- dark area -->
  <div class="abs" style="left:0;top:33px;width:212px;height:34px;background:linear-gradient(90deg,#0e3048 0,#0c2a40 44px,#06101c 48px,#050a12 100%)"></div>
  <!-- cursor -->
  <svg class="abs" style="left:44px;top:47px" width="8" height="12" viewBox="0 0 8 12"><path d="M.5 .5v9l2.200-2 1.600 3.600 1.400-.6-1.600-3.500h3z" fill="#fff" stroke="#222" stroke-width=".6"/></svg>

  <!-- card 1 shark -->
  <div class="abs" style="left:0;top:67px;width:63px;height:167px;border-radius:0 3px 3px 0;overflow:hidden;background:#0f5a78">
   <svg width="63" height="167" viewBox="0 0 63 167">
    <rect x="0" y="0" width="63" height="167" fill="#0f5a78"/>
    <polygon points="33.5,-0.2 64.8,-0.2 64.8,36.6 42.9,33.5" fill="#0a4558" />
    <polygon points="33.5,58.5 64.8,55.4 64.8,77.9 35.1,77.9" fill="#2f9a5a" opacity=".85"/>
    <polygon points="30.4,74.1 64.8,72.6 64.8,102.2 30.4,102.2" fill="#1c7cc4" />
    <polygon points="-0.9,99.1 64.8,99.1 64.8,138.2 -0.9,138.2" fill="#0c4a5e" />
    <polygon points="-0.9,3.8 27.2,1.0 39.1,14.1 36.0,28.5 14.8,18.5 -0.9,21.6" fill="#3c80da" />
    <polygon points="-0.9,8.5 24.8,5.4 32.9,15.4 14.8,12.2 -0.9,14.8" fill="#6aa4ea" opacity=".75"/>
    <polygon points="-0.9,21.0 14.8,17.9 35.4,27.2 37.2,43.5 -0.9,46.6" fill="#e9e2d6" />
    <polygon points="-0.9,25.7 17.9,23.5 32.9,30.4 32.9,38.2 -0.9,39.8" fill="#f6f2ea" />
    <polygon points="-0.9,42.9 34.1,42.9 36.0,53.5 -0.9,54.1" fill="#5a2a2a" />
    <path d="M-0.9 44.8l2.200 3 2.200-3 2.200 3 2.200-3 2.200 3 2.200-3 2.200 3 2.200-3 2.200 3 2.200-3 2.200 3 2.200-3 2.200 3 2.200-3 2.200 3 2.200-3v-2h-35.200z" fill="#fff"/>
    <polygon points="36.0,36.0 57.9,31.0 46.0,49.8" fill="#3c86de" />
    <polygon points="-0.9,69.4 34.1,70.4 39.1,89.8 42.9,103.8 31.0,121.6 14.1,122.2 -0.9,112.2" fill="#e6ded2" />
    <polygon points="-0.9,89.8 14.8,96.0 27.2,117.9 14.1,122.2 -0.9,112.2" fill="#cfc6b8" />
    <polygon points="19.1,77.9 37.2,74.1 39.8,90.4 24.8,102.9" fill="#2f8ede" />
    <polygon points="37.2,90.4 59.1,82.2 48.5,102.9 39.8,105.4" fill="#eee6da" />
    <polygon points="39.8,99.1 51.0,95.4 46.0,103.8" fill="#cbc2b4" />
    <rect x="44.8" y="99.1" width="2.2" height="31.2" rx="1" fill="#8a5ad4" opacity="1"/>
    <rect x="48.5" y="89.8" width="2.5" height="43.8" rx="1" fill="#9a68e0" opacity="1"/>
    <rect x="52.9" y="96.0" width="2.2" height="35.9" rx="1" fill="#7a50c8" opacity="1"/>
    <rect x="56.9" y="86.6" width="2.5" height="46.9" rx="1" fill="#4a6ee0" opacity="0.9"/>
    <rect x="60.7" y="92.9" width="2.2" height="40.6" rx="1" fill="#8a5ad4" opacity="1"/>
    <rect x="50.7" y="108.5" width="1.9" height="25.0" rx="1" fill="#c09af0" opacity="0.8"/>
    <polygon points="42.9,127.2 64.8,124.1 64.8,138.2 39.8,138.2" fill="#4aa8e0" opacity=".55"/>
    <circle cx="18.5" cy="60.1" r="18" fill="#e8a010" stroke="#9a5a06" stroke-width="1.200"/><circle cx="18.5" cy="60.1" r="13.500" fill="#f08c12"/>
    <path d="M18.5 47.6l3.400 8h8.600l-6.900 5.400 2.600 8.400-7.700-5.100-7.700 5.100 2.600-8.400-6.900-5.400h8.600z" fill="#ffd244"/>
    <circle cx="49.8" cy="51.6" r="8.700" fill="#d8980e" stroke="#8a5206" stroke-width="1"/><circle cx="49.8" cy="51.6" r="6.200" fill="#e8a818"/>
    <path d="M49.8 45.8l1.600 3.700h4l-3.200 2.500 1.200 3.900-3.600-2.400-3.600 2.400 1.200-3.900-3.200-2.500h4z" fill="#f6d25a"/>
    <polygon points="-0.9,137.2 64.8,137.2 64.8,171.0 -0.9,171.0" fill="#0c2f5a" />
    <ellipse cx="42.9" cy="150.7" rx="20" ry="8" fill="#1f62a4" opacity=".8"/>
   </svg>
   <div class="abs" style="left:-2px;top:139px;font-size:13px;font-weight:bold;color:#8fe85a;line-height:16px;text-shadow:0 0 2px #0a5">e</div>
  </div>
  <!-- card 2 -->
  <div class="abs" style="left:67.700px;top:66px;width:91.700px;height:79.500px;border-radius:3px;overflow:hidden;background:linear-gradient(180deg,#2b9bc6 0,#3aa6cc 30%,#2a86a8 55%,#b8541a 74%,#c4561a 100%)">
   <svg width="92" height="80" viewBox="0 0 92 80">
    <ellipse cx="40" cy="22" rx="14" ry="5" fill="#7fd0e8" opacity=".6"/>
    <path d="M44 36c-2-16 6-30 24-31 16-1 26 10 24 26v30H46z" fill="#e8521c"/>
    <path d="M52 10c6-6 18-7 26-2-8-2-18 0-24 6z" fill="#f68a4a"/>
    <path d="M60 40l4-6 4 6 4-7 4 7v8H60z" fill="#f6f0ea"/>
    <ellipse cx="71.500" cy="16.500" rx="9" ry="6" fill="#2a2226" transform="rotate(12 71.500 16.500)"/><path d="M62 12l-5 3 2 5z" fill="#2a2226"/>
    <circle cx="72" cy="16.500" r="3.400" fill="none" stroke="#f4f4f4" stroke-width="1.300"/><circle cx="72.500" cy="16.500" r="1" fill="#f4f4f4"/>
    <circle cx="55.500" cy="11.800" r="4.400" fill="#fff"/><circle cx="56.500" cy="12.300" r="2.600" fill="#2a72d8"/><circle cx="57" cy="12.500" r="1.200" fill="#0a1a3a"/>
    <path d="M0 40c4-6 10-6 14 0l2 22H0z" fill="#d84a1a"/>
    <path d="M1.500 1.500L22.500-3 35 37 15.500 43.500z" fill="#f6f6f6" stroke="#b4bac2" stroke-width=".7"/>
    <path d="M4.500 4l16-3.500 10.500 33.500-14.500 4.800z" fill="#1e4a4e"/>
    <path d="M11 22l14-4 4 11-12 4z" fill="#3a8a6a" opacity=".7"/>
    <g transform="matrix(.97 -.21 .3 .95 0 0)"><g fill="#6fcf5a"><rect x="4" y="7" width="2.800" height="2.800" rx=".7"/><rect x="12" y="12" width="2.800" height="2.800" rx=".7"/><rect x="8" y="22" width="2.800" height="2.800" rx=".7"/></g>
     <g fill="#f4b83a"><rect x="8" y="7" width="2.800" height="2.800" rx=".7"/><rect x="16" y="12" width="2.800" height="2.800" rx=".7"/><rect x="4" y="17" width="2.800" height="2.800" rx=".7"/></g>
     <g fill="#5ab0f4"><rect x="12" y="7" width="2.800" height="2.800" rx=".7"/><rect x="4" y="12" width="2.800" height="2.800" rx=".7"/><rect x="12" y="17" width="2.800" height="2.800" rx=".7"/></g>
     <g fill="#f47a8a"><rect x="16" y="7" width="2.800" height="2.800" rx=".7"/><rect x="8" y="12" width="2.800" height="2.800" rx=".7"/><rect x="8" y="17" width="2.800" height="2.800" rx=".7"/><rect x="16" y="17" width="2.800" height="2.800" rx=".7"/></g>
     <g fill="#e8f0f4"><rect x="4" y="34" width="2.800" height="2.800" rx=".7"/><rect x="8" y="34" width="2.800" height="2.800" rx=".7"/><rect x="12" y="34" width="2.800" height="2.800" rx=".7"/><rect x="16" y="34" width="2.800" height="2.800" rx=".7"/></g></g>
    <path d="M10 47l14-4 12 4-2 12H12z" fill="#8a5a2a"/><path d="M10 47l14-4 12 4-12 3z" fill="#3a8f8a"/>
    <path d="M0 50c4-2 8-1 10 2l2 8H0z" fill="#2a8a9a"/>
    <g fill="#f4b81c" stroke="#a86808" stroke-width=".6"><ellipse cx="39.500" cy="58" rx="7" ry="2.800"/><ellipse cx="39.500" cy="55" rx="7" ry="2.800"/><ellipse cx="39.500" cy="52" rx="7" ry="2.800"/><ellipse cx="39.500" cy="49" rx="7" ry="2.800"/><ellipse cx="39.500" cy="46" rx="7" ry="2.800"/><ellipse cx="39.500" cy="43" rx="7" ry="2.800"/>
     <ellipse cx="58" cy="58" rx="7" ry="2.800"/><ellipse cx="58" cy="55" rx="7" ry="2.800"/><ellipse cx="58" cy="52" rx="7" ry="2.800"/>
     <circle cx="50" cy="53" r="6"/>
     <path d="M62 44c0-2 9-2 9 0v14h-9z"/><ellipse cx="66.500" cy="44" rx="4.500" ry="1.600" fill="#f8d44a"/>
     <path d="M73 42l9-3 2 20H72zM84 32l7.500-2v27H86z" fill="#e8b020"/></g>
    <path d="M74.500 42.500l6.500-2 .5 4-6.500 1.500z" fill="#f8dc6a"/>
    <path d="M50 50l.9 2h2.100l-1.700 1.300.6 2.100-1.900-1.200-1.900 1.200.6-2.100-1.700-1.300h2.100z" fill="#ffe88a"/>
    <rect x="0" y="58.500" width="92" height="21.500" fill="#c4501a" opacity=".9"/>
    <ellipse cx="14" cy="70" rx="10" ry="6" fill="#f08a2a" opacity=".45"/><ellipse cx="80" cy="72" rx="10" ry="6" fill="#e8702a" opacity=".4"/>
    <path d="M0 58.500h92" stroke="#f4a040" stroke-width="1" opacity=".8"/>
    <text x="46.500" y="70.800" text-anchor="middle" font-size="9" font-weight="bold" fill="#ffd94a" stroke="#7a2408" stroke-width="1.200" paint-order="stroke" stroke-linejoin="round" font-family="Liberation Sans, Noto Sans CJK SC, sans-serif">幸运夺宝</text>
    <text x="46.500" y="78.200" text-anchor="middle" font-size="6" fill="#fff" font-family="Liberation Sans, sans-serif" textLength="32" lengthAdjust="spacingAndGlyphs">EXCHARGE</text>
   </svg>
  </div>
  <!-- card 3 -->
  <div class="abs" style="left:67.800px;top:153.600px;width:91.700px;height:80.400px;border-radius:3px;overflow:hidden;background:linear-gradient(180deg,#2a7ed4 0,#3a8ad8 35%,#c08a2a 62%,#7a3a4a 80%,#6a2f3a 100%)">
   <svg width="92" height="81" viewBox="0 0 92 81">
    <path d="M0 0h60v20c-20 6-40 16-60 30z" fill="#2f86dc"/>
    <circle cx="24" cy="3" r="2" fill="none" stroke="#cfe8ff" stroke-width=".6"/><circle cx="29" cy="6" r="1.300" fill="none" stroke="#cfe8ff" stroke-width=".5"/><circle cx="37" cy="4" r="1.600" fill="none" stroke="#cfe8ff" stroke-width=".5"/>
    <path d="M34 40c8-4 20-4 30 0l4 20H30z" fill="#e8a820"/><path d="M40 36c6-3 14-3 20 0l-2 8H42z" fill="#c87a18"/>
    <circle cx="44" cy="38" r="1.500" fill="#e84a4a"/><circle cx="49" cy="37" r="1.500" fill="#4ab8e8"/><circle cx="47" cy="52" r="2.500" fill="#e88ad8"/>
    <path d="M2 30c2-12 8-20 18-22 8-1 14 2 22 3 6 0 10-1 12-2-1 6-5 11-11 16-8 7-12 18-12 36H2z" fill="#8a6ee0"/>
    <path d="M10 14c4-4 10-6 16-5-6 2-10 6-12 12z" fill="#b6a0f4"/>
    <path d="M1 28l8-8 2 10-6 8z" fill="#7a5ed0"/>
    <path d="M18 36c6-6 18-12 32-20-2 8-8 14-14 20-5 6-6 14-6 24l-10-4z" fill="#f2ece6"/>
    <path d="M30 16c6 2 14 0 22-5-3 5-8 9-14 11z" fill="#c83a3a"/><path d="M31 16l2 2.500 1.500-2 1.500 2 1.500-2.500 1.500 2 1.500-3 1.500 2 2-3" stroke="#fff" stroke-width="1" fill="none"/>
    <circle cx="20" cy="14.500" r="3.600" fill="#fff"/><circle cx="20.500" cy="15" r="2.200" fill="#3a8ad8"/><circle cx="20.800" cy="15.200" r="1" fill="#14203a"/>
    <path d="M54 26.500l33 2.500 .6 24-29.600 1.600z" fill="#f4f8fc" stroke="#c0cfe0" stroke-width=".5"/>
    <path d="M54.300 27l32.500 2.500 .1 3.500-32.300-2.500z" fill="#2a86d8"/>
    <g fill="#3a86d8"><rect x="58" y="36" width="3" height="2.500"/><rect x="63" y="36.300" width="3" height="2.500"/><rect x="58.300" y="41" width="3" height="2.500"/><rect x="63.300" y="41.300" width="3" height="2.500"/><rect x="58.600" y="46" width="3" height="2.500"/><rect x="63.600" y="46.300" width="3" height="2.500"/><rect x="59" y="50.500" width="7" height="2"/></g>
    <circle cx="75.500" cy="41" r="6.800" fill="#1f86dc"/><text x="75.500" y="44.300" text-anchor="middle" font-size="8.500" font-weight="bold" fill="#fff" font-family="Liberation Sans, sans-serif">50</text>
    <rect x="0" y="58" width="92" height="23" fill="#5a2a4a" opacity=".72"/>
    <ellipse cx="70" cy="66" rx="18" ry="7" fill="#e88a2a" opacity=".5"/><ellipse cx="12" cy="72" rx="12" ry="6" fill="#c86a2a" opacity=".4"/>
    <text x="46.500" y="70.500" text-anchor="middle" font-size="9" font-weight="bold" fill="#fbe4ff" stroke="#7a1f9a" stroke-width="1.200" paint-order="stroke" stroke-linejoin="round" font-family="Liberation Sans, Noto Sans CJK SC, sans-serif">壕礼兑换</text>
    <text x="46.500" y="78.500" text-anchor="middle" font-size="6" fill="#f4f4f4" font-family="Liberation Sans, sans-serif" textLength="29" lengthAdjust="spacingAndGlyphs">TREASURE</text>
   </svg>
  </div>
  <svg class="abs" style="left:67.800px;top:153.600px" width="96" height="30" viewBox="0 0 96 30">
    <path d="M54 -3l40 5.400-2.400 24.100-40.200-4z" fill="#1a9cbc" stroke="#0e7a98" stroke-width=".6"/>
    <g transform="rotate(7 70 12)"><text x="55" y="5.500" font-size="5" fill="#e8f8fc" font-weight="bold" font-family="Liberation Sans, sans-serif">JD</text><text x="56" y="20" font-size="13.500" fill="#fff" font-weight="bold" font-family="Liberation Sans, sans-serif" textLength="34" lengthAdjust="spacingAndGlyphs">¥100</text></g>
  </svg>
  <!-- right icons -->
  <svg class="abs" style="left:163px;top:60px" width="49" height="180" viewBox="0 0 49 180">
   <!-- chest -->
   <path d="M11 9c1-5 8-7 16-7s13 2 13 7l-1 15-27 1z" fill="#e8a21a" stroke="#7a4208" stroke-width=".9"/>
   <path d="M14.500 10c1-3 6-4.500 12-4.500s10 1.500 10 4.500l-1 11-20 1z" fill="#a85a10"/>
   <path d="M12 8c4-3 22-4 27-1M20 3l-1 6M32 3l1 6" stroke="#ffd95a" stroke-width="1.300" fill="none"/>
   <circle cx="17" cy="6.500" r="1.800" fill="#4ad0f0" stroke="#1a7a9a" stroke-width=".4"/>
   <path d="M15 24l5-6 7-1 5 4-2 7-10 2z" fill="#b85ae8" stroke="#6a2a9a" stroke-width=".5"/><path d="M19 23l3-3 4 .5 2 2.500-3 3z" fill="#f0d4ff"/>
   <circle cx="33" cy="23" r="2.800" fill="#f2c22a" stroke="#8a5a08" stroke-width=".5"/><circle cx="13" cy="22" r="2.500" fill="#f2c22a" stroke="#8a5a08" stroke-width=".5"/>
   <path d="M6.500 27l17 3 17.500-4.500 .5 14-17.500 5.500L7 41z" fill="#f0b020" stroke="#7a4208" stroke-width=".9"/>
   <path d="M23.500 30v15" stroke="#7a4208" stroke-width=".7"/><path d="M7 33l16.500 4 17.500-5" stroke="#c07a10" stroke-width="2.200" fill="none"/>
   <g fill="#f8cc30" stroke="#8a5a08" stroke-width=".6"><circle cx="9" cy="29" r="3.300"/><circle cx="38" cy="27" r="3.300"/><circle cx="10" cy="40" r="3.500"/><circle cx="37" cy="41" r="3.500"/><circle cx="24" cy="43" r="3.500"/><circle cx="17" cy="31" r="3"/><circle cx="30" cy="30" r="3"/></g>
   <!-- calendar -->
   <g transform="rotate(-10 24 76)"><rect x="14" y="64" width="20" height="22" rx="2" fill="#f6f3ea" stroke="#c8b890" stroke-width=".6"/><rect x="14" y="64" width="20" height="6.500" rx="2" fill="#e8481c"/><path d="M19 74h9l-5 10" stroke="#222" stroke-width="2.400" fill="none"/></g>
   <path d="M10 84l6-4 2 8z" fill="#e8a018"/>
   <!-- emoji -->
   <circle cx="23" cy="112" r="8.500" fill="#f8c81c" stroke="#c88a08" stroke-width=".7"/><circle cx="20" cy="110" r="1.200" fill="#5a3a08"/><circle cx="26" cy="110" r="1.200" fill="#5a3a08"/><path d="M19.500 114.500c2 2 5 2 7 0" stroke="#5a3a08" stroke-width=".9" fill="none"/>
   <circle cx="32" cy="117" r="5.500" fill="#5aa8f0"/><path d="M20 118c1.500-2.500 5-1 3.500 2l-3.500 3-3.500-3c-1.500-3 2-4.500 3.500-2z" fill="#f04a5a"/>
   <!-- tickets -->
   <g transform="rotate(18 26 152)"><rect x="18" y="140" width="11" height="20" rx="1" fill="#e8a820" stroke="#a87008" stroke-width=".6"/><rect x="23" y="138" width="11" height="20" rx="1" fill="#f4c030" stroke="#a87008" stroke-width=".6"/></g>
   <circle cx="14" cy="158" r="4" fill="#8ad048"/><circle cx="34" cy="160" r="4" fill="#48b8e8"/><circle cx="10" cy="163" r="3" fill="#e85a8a"/>
   <g font-family="Liberation Sans, Noto Sans CJK SC, sans-serif" font-weight="bold" text-anchor="middle" fill="#fff" stroke="#1f7fe0" stroke-width="1.800" paint-order="stroke" stroke-linejoin="round">
    <text x="23" y="50.500" font-size="10.500">商城</text>
    <text x="24" y="89.500" font-size="10.500">七天登陆</text>
    <text x="24" y="128" font-size="10.500">邀请好友</text>
    <text x="24" y="169.500" font-size="10.500">兑换码</text>
   </g>
  </svg>
  <!-- streaks under cards -->
  <div class="abs" style="left:0;top:234px;width:212px;height:21px;background:linear-gradient(115deg,#0c3a6a 0,#0a2f58 10%,#13487c 16%,#08203c 24%,#0e3a68 33%,#061426 44%,#0a2a4c 58%,#050c16 70%,#081c34 85%,#050c16 100%)"></div>
  <!-- bottom bar -->
  <div class="abs" style="left:0;top:254px;width:212px;height:35px;background:linear-gradient(180deg,#12405f 0,#0d3350 35%,#092338 70%,#06141f 100%);border-top:1px solid #1a4a70"></div>
  <div class="abs" style="left:41px;top:258px;width:1px;height:27px;background:linear-gradient(180deg,rgba(120,180,230,0),rgba(120,180,230,.6),rgba(120,180,230,0))"></div>
  <div class="abs" style="left:127px;top:258px;width:1px;height:27px;background:linear-gradient(180deg,rgba(120,180,230,0),rgba(120,180,230,.6),rgba(120,180,230,0))"></div>
  <div class="abs gb" style="left:-12px;top:264px;text-decoration:underline">聚宝盆</div>
  <svg class="abs" style="left:63px;top:262px" width="18" height="18" viewBox="0 0 18 18"><rect x="2" y="7" width="13" height="10" rx="1" fill="#cfe6fa"/><rect x="1" y="5" width="15" height="3.500" rx="1" fill="#e6f2fd"/><rect x="7.300" y="5" width="2.400" height="12" fill="#4a8fc8"/><path d="M8.500 5c-2-4-6-3-4 0zM8.500 5c2-4 6-3 4 0z" fill="#cfe6fa"/></svg>
  <div class="abs gb" style="left:85px;top:264px">活动</div>
  <div class="abs" style="left:99px;top:257px;width:10px;height:10px;border-radius:5px;background:radial-gradient(circle at 40% 35%,#ff8a3a,#f0501a)"></div>
  <svg class="abs" style="left:148px;top:263px" width="16" height="16" viewBox="0 0 16 16"><circle cx="8" cy="8" r="6.500" fill="#e6f2fd" stroke="#4a90d0" stroke-width="1.600"/><circle cx="8" cy="8" r="4.300" fill="#2d78c0"/><path d="M8 4.500l1.100 2.300 2.500.3-1.800 1.700.5 2.500L8 10.100l-2.300 1.200.5-2.500-1.800-1.700 2.500-.3z" fill="#fff"/></svg>
  <div class="abs gb" style="left:168px;top:264px">礼包</div>
 </div>
</div>
<div id="chrome" class="abs" style="left:36px;top:100px;width:633px;height:377px;background:#fff;border:1px solid #8f959c;border-radius:3px 3px 2px 2px;overflow:hidden;box-shadow:0 0 3px rgba(0,0,0,.35)">
<div class="abs" style="left:-37px;top:-101px;width:1024px;height:560px">
<div class="abs" style="left:37px;top:101px;width:631px;height:22px;background:#dee1e6"></div>
<div class="abs" style="left:617.5px;top:100.5px;width:49.5px;height:9.5px;border:1px solid #8d9298;border-top:none;border-radius:0 0 3px 3px;background:linear-gradient(180deg,#e9ebee,#d9dce1)"></div>
<div class="abs" style="left:630px;top:101px;width:1px;height:9px;background:#9a9fa6"></div><div class="abs" style="left:643.5px;top:101px;width:1px;height:9px;background:#9a9fa6"></div>
<svg class="abs" style="left:618px;top:101px" width="49" height="9" viewBox="0 0 49 9" fill="none" stroke="#6f747b" stroke-width=".8"><rect x="3.5" y="4.5" width="6.5" height="2.2" rx=".8" fill="#fff"/><rect x="16.5" y="1.8" width="6.5" height="5.2" rx=".6" fill="#fff"/><path d="M18.7 4.4h2.2" /><path d="M34.500 2l5 5M39.500 2l-5 5" stroke="#8a9098" stroke-width="2"/><path d="M34.500 2l5 5M39.500 2l-5 5" stroke="#fff" stroke-width="1"/></svg>
<svg class="abs" style="left:47px;top:110px" width="9" height="9" viewBox="0 0 9 9"><rect width="8.500" height="8.500" rx="1.500" fill="#2b2b2b"/><text x="4.250" y="6.200" font-size="4.800" font-weight="bold" fill="#fff" text-anchor="middle" font-family="Liberation Sans, sans-serif" letter-spacing="-.2">BT</text></svg>
<div class="abs tb" style="left:61px;top:109px">宝塔Linux面板</div>
<div class="abs tx" style="left:157px;top:109px">✕</div>
<div class="abs" style="left:169px;top:104px;width:130px;height:20px;background:#fff;border-radius:5px 5px 0 0"></div>
<svg class="abs" style="left:165px;top:119px" width="138" height="5" viewBox="0 0 138 5"><path d="M0 5h4V0A4 4 0 0 1 0 5zM138 5h-4V0a4 4 0 0 0 4 5z" fill="#fff"/></svg>
<svg class="abs" style="left:175px;top:110px" width="9" height="9" viewBox="0 0 9 9"><circle cx="4.5" cy="4.5" r="4" fill="#50545a"/><path d="M2.2 2c1 .3 1.500 1.200 2.500 1.200S6 2 6.800 2.400M1 5.500c1-.4 2 0 2.400 1s-.2 1.600 0 2M5.500 5c.8-.3 2 .2 2.600 1" stroke="#fff" stroke-width=".8" fill="none"/></svg>
<div class="abs tb" style="left:188px;top:109px;color:#333">捕鱼后台管理系统</div>
<div class="abs tx" style="left:284.5px;top:109px">✕</div>
<svg class="abs" style="left:303px;top:110px" width="9" height="9" viewBox="0 0 9 9"><circle cx="4.5" cy="4.5" r="4" fill="#50545a"/><path d="M2.2 2c1 .3 1.500 1.200 2.500 1.200S6 2 6.800 2.400M1 5.500c1-.4 2 0 2.400 1s-.2 1.600 0 2M5.500 5c.8-.3 2 .2 2.600 1" stroke="#fff" stroke-width=".8" fill="none"/></svg>
<div class="abs tb" style="left:316px;top:109px">404 Not Found</div>
<div class="abs tx" style="left:412px;top:109px">✕</div>
<div class="abs" style="left:424px;top:109px;width:1px;height:10px;background:#9aa0a6"></div>
<div class="abs tb" style="left:430px;top:109px">新标签页</div>
<div class="abs tx" style="left:539.5px;top:109px">✕</div>
<div class="abs" style="left:552px;top:109px;width:1px;height:10px;background:#9aa0a6"></div>
<div class="abs" style="left:558.5px;top:106.5px;font-size:12px;line-height:14px;color:#3c4043">+</div>
<div class="abs" style="left:37px;top:123px;width:631px;height:21.5px;background:#fff"></div>
<svg class="abs" style="left:43px;top:126.5px" width="48" height="13" viewBox="0 0 48 13" fill="none" stroke="#5f6368" stroke-width="1.1"><path d="M10 6.5H2.500M6 2.800L2.300 6.500 6 10.200"/><path d="M19.500 6.500H27M23.500 2.800l3.700 3.700-3.700 3.700" stroke="#babcbe"/><path d="M43.300 4a4 4 0 1 0 .9 3.600"/><path d="M44.500 1.800v3.200h-3.200z" fill="#5f6368" stroke="none"/></svg>
<div class="abs" style="left:95px;top:126px;width:537px;height:15px;border-radius:8px;background:#f1f3f4"></div>
<svg class="abs" style="left:100px;top:129px" width="9" height="8" viewBox="0 0 9 8"><path d="M4.5 0L9 8H0z" fill="#5f6368"/><path d="M4.5 3v2.500M4.500 6.300v.8" stroke="#fff" stroke-width=".9"/></svg>
<div class="abs" style="left:113px;top:127px;font-size:7.3px;line-height:12px;color:#5f6368;white-space:nowrap">不安全</div>
<div class="abs" style="left:139px;top:128.5px;width:1px;height:9px;background:#9aa0a6"></div>
<div class="abs" style="left:144.5px;top:127px;font-size:7.5px;line-height:12px;color:#34373b;white-space:nowrap">43.243.74.44<span style="color:#6a6e73;letter-spacing:.45px">/admin.php/Index/homepage.html</span></div>
<svg class="abs" style="left:612px;top:128px" width="10" height="10" viewBox="0 0 10 10"><path d="M5 1l1.200 2.700 2.900.3-2.200 1.900.7 2.900L5 7.300 2.400 8.800l.7-2.900L.9 4l2.900-.3z" fill="none" stroke="#5f6368" stroke-width=".9"/></svg>
<svg class="abs" style="left:633px;top:127.5px" width="11" height="11" viewBox="0 0 11 11"><circle cx="5.5" cy="5.5" r="5" fill="#5f6368"/><circle cx="5.5" cy="4.2" r="1.7" fill="#fff"/><path d="M2.300 8.600c.8-1.500 5.600-1.500 6.400 0a4.400 4.400 0 0 1-6.400 0z" fill="#fff"/></svg>
<svg class="abs" style="left:654.5px;top:128.5px" width="3" height="10" viewBox="0 0 3 10" fill="#5f6368"><circle cx="1.5" cy="1.5" r=".9"/><circle cx="1.5" cy="4.7" r=".9"/><circle cx="1.5" cy="7.9" r=".9"/></svg>
<div class="abs" style="left:37px;top:144.5px;width:631px;height:15px;background:#fff;border-bottom:1px solid #dcdde0"></div>
<svg class="abs" style="left:45px;top:146px" width="8" height="8" viewBox="0 0 9 9"><circle cx="4.5" cy="4.5" r="4" fill="#50545a"/><path d="M2.2 2c1 .3 1.500 1.200 2.500 1.200S6 2 6.800 2.400M1 5.500c1-.4 2 0 2.400 1s-.2 1.600 0 2M5.500 5c.8-.3 2 .2 2.600 1" stroke="#fff" stroke-width=".8" fill="none"/></svg>
<div class="abs bm" style="left:58px;top:144.5px">淘宝</div>
<svg class="abs" style="left:79px;top:146px" width="8" height="8" viewBox="0 0 9 9"><circle cx="4.5" cy="4.5" r="4" fill="#50545a"/><path d="M2.2 2c1 .3 1.500 1.200 2.500 1.200S6 2 6.800 2.400M1 5.500c1-.4 2 0 2.400 1s-.2 1.600 0 2M5.500 5c.8-.3 2 .2 2.600 1" stroke="#fff" stroke-width=".8" fill="none"/></svg>
<div class="abs bm" style="left:92px;top:144.5px">淘宝特卖</div>
<svg class="abs" style="left:126px;top:146px" width="8" height="8" viewBox="0 0 9 9"><circle cx="4.5" cy="4.5" r="4" fill="#50545a"/><path d="M2.2 2c1 .3 1.500 1.200 2.500 1.200S6 2 6.800 2.400M1 5.500c1-.4 2 0 2.400 1s-.2 1.600 0 2M5.500 5c.8-.3 2 .2 2.600 1" stroke="#fff" stroke-width=".8" fill="none"/></svg>
<div class="abs bm" style="left:139px;top:144.5px">淘宝团购</div>
<div class="abs" style="left:173px;top:145.5px;width:8.5px;height:8.5px;background:#e01616;border-radius:1px;color:#fff;font-size:6.5px;font-weight:bold;line-height:8.5px;text-align:center">T</div>
<div class="abs bm" style="left:186px;top:144.5px">天猫商城</div>
<div class="abs" style="left:220px;top:145.5px;width:8.5px;height:8.5px;background:#e01616;border-radius:1px;color:#fff;font-size:6.5px;font-weight:bold;line-height:8.5px;text-align:center">T</div>
<div class="abs bm" style="left:233px;top:144.5px">天猫女装</div>
<svg class="abs" style="left:266.5px;top:146px" width="8" height="8" viewBox="0 0 9 9"><circle cx="4.5" cy="4.5" r="4" fill="#50545a"/><path d="M2.2 2c1 .3 1.500 1.200 2.500 1.200S6 2 6.800 2.400M1 5.500c1-.4 2 0 2.400 1s-.2 1.600 0 2M5.500 5c.8-.3 2 .2 2.600 1" stroke="#fff" stroke-width=".8" fill="none"/></svg>
<div class="abs bm" style="left:279px;top:144.5px">天猫电器城</div>
<svg class="abs" style="left:320px;top:146px" width="8" height="8" viewBox="0 0 9 9"><circle cx="4.5" cy="4.5" r="4" fill="#50545a"/><path d="M2.2 2c1 .3 1.500 1.200 2.500 1.200S6 2 6.800 2.400M1 5.500c1-.4 2 0 2.400 1s-.2 1.600 0 2M5.500 5c.8-.3 2 .2 2.600 1" stroke="#fff" stroke-width=".8" fill="none"/></svg>
<div class="abs bm" style="left:333px;top:144.5px">2345导航</div>
<div class="abs" style="left:37px;top:160px;width:631px;height:27.5px;background:#fff"></div>
<svg class="abs" style="left:46px;top:160px" width="68" height="26" viewBox="0 0 68 26">
 <ellipse cx="34" cy="16.500" rx="32.500" ry="7.800" fill="#3a8fe2" stroke="#6a3a2a" stroke-width=".7"/>
 <path d="M3 17c2-5 8-7 14-6-5 2-8 5-8 9-3 0-5-1-6-3zM65 16c-2-5-6-6-10-6 4 2 5 6 4 10 3 0 5-2 6-4z" fill="#dff1ff"/>
 <path d="M8 14c3-2 6-2 9-1M10 20c2 1 5 1 7 0" stroke="#fff" stroke-width="1.200" fill="none"/>
 <path d="M17 9c-2-3-1-6 1-7 0 3 1 5 2 7zM22 7c-1-4 1-6 3-6-1 3 0 5 1 7zM41 6c-1-3 0-5 2-5 0 2 0 4 1 6zM46 7c0-3 2-5 4-5-1 2-1 4-1 6zM52 6c1-3 3-4 5-3-2 1-3 3-3 5z" fill="#5fae2c" stroke="#3a6a1a" stroke-width=".3"/>
 <path d="M54 9c2-2 6-2 8 0-2 2-6 2-8 0z" fill="#3aa890"/>
 <text x="14.500" y="22.500" font-size="17.500" font-weight="900" fill="#2f9cf2" stroke="#5a2f22" stroke-width="1.100" paint-order="stroke" font-family="Liberation Sans, Noto Sans CJK SC, sans-serif">捕</text>
 <text x="37" y="22.500" font-size="17.500" font-weight="900" fill="#2f9cf2" stroke="#5a2f22" stroke-width="1.100" paint-order="stroke" textLength="22" lengthAdjust="spacingAndGlyphs" font-family="Liberation Sans, Noto Sans CJK SC, sans-serif">鱼</text>
 <path d="M38 18.500l1.200 2.600 2.800.3-2.100 1.900.6 2.800L38 24.700l-2.500 1.400.6-2.800-2.100-1.900 2.800-.3z" fill="#f5a21c" stroke="#b86a0a" stroke-width=".3"/>
 <path d="M10 21c2 2 6 2 8 0-1 3-7 3-8 0z" fill="#bfe4ff" stroke="#6a3a2a" stroke-width=".4"/>
</svg>
<div class="abs" style="left:607px;top:173.5px;width:21px;height:11.5px;border:1px solid #8f8f8f;border-radius:2px;background:linear-gradient(180deg,#fdfdfd,#e9e9e9);font-size:6.3px;line-height:9.5px;text-align:center;color:#111">刷新</div>
<div class="abs" style="left:637.5px;top:173.5px;width:21px;height:11.5px;border:1px solid #8f8f8f;border-radius:2px;background:linear-gradient(180deg,#fdfdfd,#e9e9e9);font-size:6.3px;line-height:9.5px;text-align:center;color:#111">退出</div>
<div class="abs" style="left:37px;top:187.5px;width:631px;height:12.6px;background:#b9d5f5;z-index:5"></div>
<div class="abs" style="left:53px;top:187.5px;width:34px;height:12.6px;z-index:6;background:#8fbaf4;font-size:6.5px;line-height:11.5px;text-align:center;color:#2a5ab8">主页</div>
<div class="abs" style="left:37px;top:199px;width:107px;height:278px;background:#bcd6f7"></div>
<div class="abs" style="left:41px;top:199px;width:85px;height:278px;background:#fff"></div>
<div class="abs" style="left:126px;top:199px;width:3px;height:278px;background:#c9defa"></div>
<div class="abs" style="left:129px;top:199px;width:9.5px;height:278px;background:#f1f1f1"></div>
<div class="abs" style="left:130.5px;top:326px;width:6.5px;height:83px;background:#c1c1c1"></div>
<svg class="abs" style="left:129px;top:199px" width="10" height="278" viewBox="0 0 10 278"><path d="M3 7.5l1.800-2.300 1.800 2.300zM3 270.500l1.800 2.300 1.800-2.300z" fill="#505050"/></svg>
<div class="abs" style="left:138.5px;top:199px;width:5.5px;height:278px;background:#a9c8f6"></div>
<svg class="abs" style="left:139px;top:335px" width="5" height="6" viewBox="0 0 5 6"><path d="M0 3l2.500-2.500v1.800h2.300v1.400H2.500v1.800z" fill="#e8f1fd"/></svg>
<svg class="abs" style="left:51.5px;top:203.2px" width="5" height="5" viewBox="0 0 5 5"><rect x=".3" y=".3" width="4.400" height="4.400" rx="1.200" fill="#eef3fc" stroke="#8fa6d8" stroke-width=".6"/><path d="M1.300 2.500h2.400M2.500 1.300v2.400" stroke="#6a84c8" stroke-width=".6"/></svg>
<div class="abs nv" style="left:60.5px;top:200.7px;color:#3c5788">物品发放审核</div>
<svg class="abs" style="left:51.5px;top:211.735px" width="5" height="5" viewBox="0 0 5 5"><rect x=".3" y=".3" width="4.400" height="4.400" rx="1.200" fill="#eef3fc" stroke="#8fa6d8" stroke-width=".6"/><path d="M1.300 2.500h2.400M2.500 1.300v2.400" stroke="#6a84c8" stroke-width=".6"/></svg>
<div class="abs nv" style="left:60.5px;top:209.235px;color:#3c5788">系统消息发送</div>
<svg class="abs" style="left:51.5px;top:220.27px" width="5" height="5" viewBox="0 0 5 5"><rect x=".3" y=".3" width="4.400" height="4.400" rx="1.200" fill="#eef3fc" stroke="#8fa6d8" stroke-width=".6"/><path d="M1.300 2.500h2.400M2.500 1.300v2.400" stroke="#6a84c8" stroke-width=".6"/></svg>
<div class="abs nv" style="left:60.5px;top:217.77px;color:#3c5788">查看公告</div>
<svg class="abs" style="left:51.5px;top:228.805px" width="5" height="5" viewBox="0 0 5 5"><rect x=".3" y=".3" width="4.400" height="4.400" rx="1.200" fill="#eef3fc" stroke="#8fa6d8" stroke-width=".6"/><path d="M1.300 2.500h2.400M2.500 1.300v2.400" stroke="#6a84c8" stroke-width=".6"/></svg>
<div class="abs nv" style="left:60.5px;top:226.305px;color:#3c5788">添加公告</div>
<svg class="abs" style="left:51.5px;top:237.34px" width="5" height="5" viewBox="0 0 5 5"><rect x=".3" y=".3" width="4.400" height="4.400" rx="1.200" fill="#eef3fc" stroke="#8fa6d8" stroke-width=".6"/><path d="M1.300 2.500h2.400M2.500 1.300v2.400" stroke="#6a84c8" stroke-width=".6"/></svg>
<div class="abs nv" style="left:60.5px;top:234.84px;color:#3c5788">查看客服公告</div>
<svg class="abs" style="left:51.5px;top:245.875px" width="5" height="5" viewBox="0 0 5 5"><rect x=".3" y=".3" width="4.400" height="4.400" rx="1.200" fill="#eef3fc" stroke="#8fa6d8" stroke-width=".6"/><path d="M1.300 2.500h2.400M2.500 1.300v2.400" stroke="#6a84c8" stroke-width=".6"/></svg>
<div class="abs nv" style="left:60.5px;top:243.375px;color:#3c5788">添加客服公告</div>
<svg class="abs" style="left:51.5px;top:254.41px" width="5" height="5" viewBox="0 0 5 5"><rect x=".3" y=".3" width="4.400" height="4.400" rx="1.200" fill="#eef3fc" stroke="#8fa6d8" stroke-width=".6"/><path d="M1.300 2.500h2.400M2.500 1.300v2.400" stroke="#6a84c8" stroke-width=".6"/></svg>
<div class="abs nv" style="left:60.5px;top:251.91px;color:#3c5788">邮件物品发放</div>
<svg class="abs" style="left:51.5px;top:262.945px" width="5" height="5" viewBox="0 0 5 5"><rect x=".3" y=".3" width="4.400" height="4.400" rx="1.200" fill="#eef3fc" stroke="#8fa6d8" stroke-width=".6"/><path d="M1.300 2.500h2.400M2.500 1.300v2.400" stroke="#6a84c8" stroke-width=".6"/></svg>
<div class="abs nv" style="left:60.5px;top:260.445px;color:#3c5788">推送记录</div>
<svg class="abs" style="left:51.5px;top:271.48px" width="5" height="5" viewBox="0 0 5 5"><rect x=".3" y=".3" width="4.400" height="4.400" rx="1.200" fill="#eef3fc" stroke="#8fa6d8" stroke-width=".6"/><path d="M1.300 2.500h2.400M2.500 1.300v2.400" stroke="#6a84c8" stroke-width=".6"/></svg>
<div class="abs nv" style="left:60.5px;top:268.98px;color:#3c5788">封号玩家设置</div>
<svg class="abs" style="left:51.5px;top:280.015px" width="5" height="5" viewBox="0 0 5 5"><rect x=".3" y=".3" width="4.400" height="4.400" rx="1.200" fill="#eef3fc" stroke="#8fa6d8" stroke-width=".6"/><path d="M1.300 2.500h2.400M2.500 1.300v2.400" stroke="#6a84c8" stroke-width=".6"/></svg>
<div class="abs nv" style="left:60.5px;top:277.515px;color:#3c5788">意见反馈</div>
<svg class="abs" style="left:51.5px;top:288.55px" width="5" height="5" viewBox="0 0 5 5"><rect x=".3" y=".3" width="4.400" height="4.400" rx="1.200" fill="#eef3fc" stroke="#8fa6d8" stroke-width=".6"/><path d="M1.300 2.500h2.400M2.500 1.300v2.400" stroke="#6a84c8" stroke-width=".6"/></svg>
<div class="abs nv" style="left:60.5px;top:286.05px;color:#3c5788">夺宝客服</div>
<svg class="abs" style="left:43px;top:297.085px" width="5" height="5" viewBox="0 0 5 5"><rect x=".3" y=".3" width="4.400" height="4.400" fill="#fff" stroke="#7f9bd0" stroke-width=".6"/><path d="M1.200 2.500h2.600M2.500 1.200v2.600" stroke="#3a5fae" stroke-width=".7"/></svg>
<div class="abs nv" style="left:51.9px;top:294.585px;color:#243e70;font-weight:500">详细数据统计</div>
<svg class="abs" style="left:43px;top:305.62px" width="5" height="5" viewBox="0 0 5 5"><rect x=".3" y=".3" width="4.400" height="4.400" fill="#fff" stroke="#7f9bd0" stroke-width=".6"/><path d="M1.200 2.500h2.600" stroke="#3a5fae" stroke-width=".7"/></svg>
<div class="abs nv" style="left:51.9px;top:303.12px;color:#243e70;font-weight:500">夺宝活动相关管理</div>
<svg class="abs" style="left:51.5px;top:314.155px" width="5" height="5" viewBox="0 0 5 5"><rect x=".3" y=".3" width="4.400" height="4.400" rx="1.200" fill="#eef3fc" stroke="#8fa6d8" stroke-width=".6"/><path d="M1.300 2.500h2.400M2.500 1.300v2.400" stroke="#6a84c8" stroke-width=".6"/></svg>
<div class="abs nv" style="left:60.5px;top:311.655px;color:#2a5fe0;font-weight:500">商城编辑</div>
<svg class="abs" style="left:51.5px;top:322.69px" width="5" height="5" viewBox="0 0 5 5"><rect x=".3" y=".3" width="4.400" height="4.400" rx="1.200" fill="#eef3fc" stroke="#8fa6d8" stroke-width=".6"/><path d="M1.300 2.500h2.400M2.500 1.300v2.400" stroke="#6a84c8" stroke-width=".6"/></svg>
<div class="abs nv" style="left:60.5px;top:320.19px;color:#3c5788">添加商品</div>
<svg class="abs" style="left:43px;top:331.225px" width="5" height="5" viewBox="0 0 5 5"><rect x=".3" y=".3" width="4.400" height="4.400" fill="#fff" stroke="#7f9bd0" stroke-width=".6"/><path d="M1.200 2.500h2.600" stroke="#3a5fae" stroke-width=".7"/></svg>
<div class="abs nv" style="left:51.9px;top:328.725px;color:#243e70;font-weight:500">汇总数据统计</div>
<svg class="abs" style="left:51.5px;top:339.76px" width="5" height="5" viewBox="0 0 5 5"><rect x=".3" y=".3" width="4.400" height="4.400" rx="1.200" fill="#eef3fc" stroke="#8fa6d8" stroke-width=".6"/><path d="M1.300 2.500h2.400M2.500 1.300v2.400" stroke="#6a84c8" stroke-width=".6"/></svg>
<div class="abs nv" style="left:60.5px;top:337.26px;color:#3c5788">充值每日汇总</div>
<svg class="abs" style="left:51.5px;top:348.295px" width="5" height="5" viewBox="0 0 5 5"><rect x=".3" y=".3" width="4.400" height="4.400" rx="1.200" fill="#eef3fc" stroke="#8fa6d8" stroke-width=".6"/><path d="M1.300 2.500h2.400M2.500 1.300v2.400" stroke="#6a84c8" stroke-width=".6"/></svg>
<div class="abs nv" style="left:60.5px;top:345.795px;color:#3c5788">实时数据汇总</div>
<svg class="abs" style="left:51.5px;top:356.83px" width="5" height="5" viewBox="0 0 5 5"><rect x=".3" y=".3" width="4.400" height="4.400" rx="1.200" fill="#eef3fc" stroke="#8fa6d8" stroke-width=".6"/><path d="M1.300 2.500h2.400M2.500 1.300v2.400" stroke="#6a84c8" stroke-width=".6"/></svg>
<div class="abs nv" style="left:60.5px;top:354.33px;color:#3c5788">玩家在线时长</div>
<svg class="abs" style="left:51.5px;top:365.365px" width="5" height="5" viewBox="0 0 5 5"><rect x=".3" y=".3" width="4.400" height="4.400" rx="1.200" fill="#eef3fc" stroke="#8fa6d8" stroke-width=".6"/><path d="M1.300 2.500h2.400M2.500 1.300v2.400" stroke="#6a84c8" stroke-width=".6"/></svg>
<div class="abs nv" style="left:60.5px;top:362.865px;color:#3c5788">充值数据分布</div>
<svg class="abs" style="left:51.5px;top:373.9px" width="5" height="5" viewBox="0 0 5 5"><rect x=".3" y=".3" width="4.400" height="4.400" rx="1.200" fill="#eef3fc" stroke="#8fa6d8" stroke-width=".6"/><path d="M1.300 2.500h2.400M2.500 1.300v2.400" stroke="#6a84c8" stroke-width=".6"/></svg>
<div class="abs nv" style="left:60.5px;top:371.4px;color:#3c5788">夺宝卡消耗统计</div>
<svg class="abs" style="left:51.5px;top:382.435px" width="5" height="5" viewBox="0 0 5 5"><rect x=".3" y=".3" width="4.400" height="4.400" rx="1.200" fill="#eef3fc" stroke="#8fa6d8" stroke-width=".6"/><path d="M1.300 2.500h2.400M2.500 1.300v2.400" stroke="#6a84c8" stroke-width=".6"/></svg>
<div class="abs nv" style="left:60.5px;top:379.935px;color:#3c5788">竞技场数据统计</div>
<svg class="abs" style="left:51.5px;top:390.97px" width="5" height="5" viewBox="0 0 5 5"><rect x=".3" y=".3" width="4.400" height="4.400" rx="1.200" fill="#eef3fc" stroke="#8fa6d8" stroke-width=".6"/><path d="M1.300 2.500h2.400M2.500 1.300v2.400" stroke="#6a84c8" stroke-width=".6"/></svg>
<div class="abs nv" style="left:60.5px;top:388.47px;color:#3c5788">留存统计</div>
<svg class="abs" style="left:51.5px;top:399.505px" width="5" height="5" viewBox="0 0 5 5"><rect x=".3" y=".3" width="4.400" height="4.400" rx="1.200" fill="#eef3fc" stroke="#8fa6d8" stroke-width=".6"/><path d="M1.300 2.500h2.400M2.500 1.300v2.400" stroke="#6a84c8" stroke-width=".6"/></svg>
<div class="abs nv" style="left:60.5px;top:397.005px;color:#3c5788">付费留存统计</div>
<svg class="abs" style="left:51.5px;top:408.04px" width="5" height="5" viewBox="0 0 5 5"><rect x=".3" y=".3" width="4.400" height="4.400" rx="1.200" fill="#eef3fc" stroke="#8fa6d8" stroke-width=".6"/><path d="M1.300 2.500h2.400M2.500 1.300v2.400" stroke="#6a84c8" stroke-width=".6"/></svg>
<div class="abs nv" style="left:60.5px;top:405.54px;color:#3c5788">福袋奖励数据统计</div>
<svg class="abs" style="left:51.5px;top:416.575px" width="5" height="5" viewBox="0 0 5 5"><rect x=".3" y=".3" width="4.400" height="4.400" rx="1.200" fill="#eef3fc" stroke="#8fa6d8" stroke-width=".6"/><path d="M1.300 2.500h2.400M2.500 1.300v2.400" stroke="#6a84c8" stroke-width=".6"/></svg>
<div class="abs nv" style="left:60.5px;top:414.075px;color:#3c5788">福袋充值数据分布</div>
<svg class="abs" style="left:43px;top:425.11px" width="5" height="5" viewBox="0 0 5 5"><rect x=".3" y=".3" width="4.400" height="4.400" fill="#fff" stroke="#7f9bd0" stroke-width=".6"/><path d="M1.200 2.500h2.600" stroke="#3a5fae" stroke-width=".7"/></svg>
<div class="abs nv" style="left:51.9px;top:422.61px;color:#243e70;font-weight:500">兑换活动相关管理</div>
<svg class="abs" style="left:51.5px;top:433.645px" width="5" height="5" viewBox="0 0 5 5"><rect x=".3" y=".3" width="4.400" height="4.400" rx="1.200" fill="#eef3fc" stroke="#8fa6d8" stroke-width=".6"/><path d="M1.300 2.500h2.400M2.500 1.300v2.400" stroke="#6a84c8" stroke-width=".6"/></svg>
<div class="abs nv" style="left:60.5px;top:431.145px;color:#3c5788">商城编辑</div>
<svg class="abs" style="left:51.5px;top:442.18px" width="5" height="5" viewBox="0 0 5 5"><rect x=".3" y=".3" width="4.400" height="4.400" rx="1.200" fill="#eef3fc" stroke="#8fa6d8" stroke-width=".6"/><path d="M1.300 2.500h2.400M2.500 1.300v2.400" stroke="#6a84c8" stroke-width=".6"/></svg>
<div class="abs nv" style="left:60.5px;top:439.68px;color:#3c5788">添加商品</div>
<svg class="abs" style="left:51.5px;top:450.715px" width="5" height="5" viewBox="0 0 5 5"><rect x=".3" y=".3" width="4.400" height="4.400" rx="1.200" fill="#eef3fc" stroke="#8fa6d8" stroke-width=".6"/><path d="M1.300 2.500h2.400M2.500 1.300v2.400" stroke="#6a84c8" stroke-width=".6"/></svg>
<div class="abs nv" style="left:60.5px;top:448.215px;color:#3c5788">查看京东卡</div>
<svg class="abs" style="left:51.5px;top:459.25px" width="5" height="5" viewBox="0 0 5 5"><rect x=".3" y=".3" width="4.400" height="4.400" rx="1.200" fill="#eef3fc" stroke="#8fa6d8" stroke-width=".6"/><path d="M1.300 2.500h2.400M2.500 1.300v2.400" stroke="#6a84c8" stroke-width=".6"/></svg>
<div class="abs nv" style="left:60.5px;top:456.75px;color:#3c5788">竞技场物品列表</div>
<svg class="abs" style="left:51.5px;top:467.785px" width="5" height="5" viewBox="0 0 5 5"><rect x=".3" y=".3" width="4.400" height="4.400" rx="1.200" fill="#eef3fc" stroke="#8fa6d8" stroke-width=".6"/><path d="M1.300 2.500h2.400M2.500 1.300v2.400" stroke="#6a84c8" stroke-width=".6"/></svg>
<div class="abs nv" style="left:60.5px;top:465.285px;color:#3c5788">竞技场物品添加</div>
<div class="abs" style="left:144px;top:199px;width:514.5px;height:268px;background:#fff;overflow:hidden">
<div class="abs" style="left:-144px;top:-199px;width:1024px;height:560px">
<div class="abs" style="left:148.8px;top:199px;width:1px;height:268px;background:#e6f2f8"></div>
<div class="abs" style="left:177.2px;top:199px;width:1px;height:268px;background:#e6f2f8"></div>
<div class="abs" style="left:212px;top:199px;width:1px;height:268px;background:#e6f2f8"></div>
<div class="abs" style="left:269.5px;top:199px;width:1px;height:268px;background:#e6f2f8"></div>
<div class="abs" style="left:371.9px;top:199px;width:1px;height:268px;background:#e6f2f8"></div>
<div class="abs" style="left:407.7px;top:199px;width:1px;height:268px;background:#e6f2f8"></div>
<div class="abs" style="left:495.8px;top:199px;width:1px;height:268px;background:#e6f2f8"></div>
<div class="abs" style="left:547.7px;top:199px;width:1px;height:268px;background:#e6f2f8"></div>
<div class="abs" style="left:584.1px;top:199px;width:1px;height:268px;background:#e6f2f8"></div>
<div class="abs" style="left:620.5px;top:199px;width:1px;height:268px;background:#e6f2f8"></div>
<div class="abs" style="left:640.7px;top:199px;width:1px;height:268px;background:#e6f2f8"></div>
<div class="abs" style="left:149px;top:216.3px;width:510px;height:1px;background:#e6f2f8"></div>
<div class="abs" style="left:149px;top:262.7px;width:510px;height:1px;background:#e6f2f8"></div>
<div class="abs" style="left:149px;top:309.1px;width:510px;height:1px;background:#e6f2f8"></div>
<div class="abs" style="left:149px;top:355.5px;width:510px;height:1px;background:#e6f2f8"></div>
<div class="abs" style="left:149px;top:401.9px;width:510px;height:1px;background:#e6f2f8"></div>
<div class="abs" style="left:149px;top:448.3px;width:510px;height:1px;background:#e6f2f8"></div>
<div class="abs td c" style="left:163.5px;top:235.7px;color:#5a5a5a">36</div>
<div class="abs td c" style="left:195px;top:235.7px;color:#5a5a5a">1</div>
<div class="abs td c" style="left:321px;top:235.7px;color:#5a5a5a">50元京东卡</div>
<div class="abs td c" style="left:390.4px;top:235.7px;color:#5a5a5a">50</div>
<div class="abs td c" style="left:452px;top:235.7px;color:#5a5a5a">50</div>
<div class="abs td c" style="left:522px;top:235.7px;color:#5a5a5a">68</div>
<div class="abs td c" style="left:566.5px;top:235.7px;color:#5a5a5a">0</div>
<div class="abs td c" style="left:602.6px;top:235.7px;color:#5a5a5a">实体</div>
<div class="abs td c" style="left:631px;top:235.7px;color:#3e7f2a">开启</div>
<div class="abs td c" style="left:651.6px;top:235.7px;color:#5a5a5a">10</div>
<div class="abs td c" style="left:163.5px;top:281.97px;color:#5a5a5a">35</div>
<div class="abs td c" style="left:195px;top:281.97px;color:#5a5a5a">1</div>
<div class="abs td c" style="left:321px;top:281.97px;color:#5a5a5a">周生生黄金手链</div>
<div class="abs td c" style="left:390.4px;top:281.97px;color:#5a5a5a">1440</div>
<div class="abs td c" style="left:452px;top:281.97px;color:#5a5a5a">1440</div>
<div class="abs td c" style="left:522px;top:281.97px;color:#5a5a5a">2088</div>
<div class="abs td c" style="left:566.5px;top:281.97px;color:#5a5a5a">0</div>
<div class="abs td c" style="left:602.6px;top:281.97px;color:#5a5a5a">实体</div>
<div class="abs td c" style="left:631px;top:281.97px;color:#3e7f2a">开启</div>
<div class="abs td c" style="left:651.6px;top:281.97px;color:#5a5a5a">28</div>
<div class="abs td c" style="left:163.5px;top:328.24px;color:#5a5a5a">34</div>
<div class="abs td c" style="left:195px;top:328.24px;color:#5a5a5a">1</div>
<div class="abs td c" style="left:321px;top:328.24px;color:#5a5a5a">哈曼卡顿无线音响</div>
<div class="abs td c" style="left:390.4px;top:328.24px;color:#5a5a5a">1489</div>
<div class="abs td c" style="left:452px;top:328.24px;color:#5a5a5a">1489</div>
<div class="abs td c" style="left:522px;top:328.24px;color:#5a5a5a">2088</div>
<div class="abs td c" style="left:566.5px;top:328.24px;color:#5a5a5a">0</div>
<div class="abs td c" style="left:602.6px;top:328.24px;color:#5a5a5a">实体</div>
<div class="abs td c" style="left:631px;top:328.24px;color:#3e7f2a">开启</div>
<div class="abs td c" style="left:651.6px;top:328.24px;color:#5a5a5a">14</div>
<div class="abs td c" style="left:163.5px;top:374.51px;color:#5a5a5a">33</div>
<div class="abs td c" style="left:195px;top:374.51px;color:#5a5a5a">1</div>
<div class="abs td c" style="left:321px;top:374.51px;color:#5a5a5a">360行车记录仪</div>
<div class="abs td c" style="left:390.4px;top:374.51px;color:#5a5a5a">359</div>
<div class="abs td c" style="left:452px;top:374.51px;color:#5a5a5a">359</div>
<div class="abs td c" style="left:522px;top:374.51px;color:#5a5a5a">528</div>
<div class="abs td c" style="left:566.5px;top:374.51px;color:#5a5a5a">0</div>
<div class="abs td c" style="left:602.6px;top:374.51px;color:#5a5a5a">实体</div>
<div class="abs td c" style="left:631px;top:374.51px;color:#3e7f2a">开启</div>
<div class="abs td c" style="left:651.6px;top:374.51px;color:#5a5a5a">20</div>
<div class="abs td c" style="left:163.5px;top:420.78px;color:#5a5a5a">32</div>
<div class="abs td c" style="left:195px;top:420.78px;color:#5a5a5a">1</div>
<div class="abs td c" style="left:321px;top:420.78px;color:#5a5a5a">MacBook Air笔记本</div>
<div class="abs td c" style="left:390.4px;top:420.78px;color:#5a5a5a">6838</div>
<div class="abs td c" style="left:452px;top:420.78px;color:#5a5a5a">6838</div>
<div class="abs td c" style="left:522px;top:420.78px;color:#5a5a5a">9688</div>
<div class="abs td c" style="left:566.5px;top:420.78px;color:#5a5a5a">0</div>
<div class="abs td c" style="left:602.6px;top:420.78px;color:#5a5a5a">实体</div>
<div class="abs td c" style="left:631px;top:420.78px;color:#3e7f2a">开启</div>
<div class="abs td c" style="left:651.6px;top:420.78px;color:#5a5a5a">7</div>
<svg class="abs" style="left:220px;top:199px;overflow:hidden" width="44" height="268" viewBox="0 0 44 268" font-family="Liberation Sans, Noto Sans CJK SC, sans-serif">
 <!-- row 37 partial: jd card blue/yellow -->
 <rect x="0" y="0" width="43" height="12.500" fill="#1f5fb8"/><path d="M21 0h22v12.500H19c1-4 1.500-8 2-12.500z" fill="#f7d21e"/>
 <circle cx="27" cy="2.500" r="4" fill="#f9dc3a" stroke="#2a3f7a" stroke-width="1.200"/><circle cx="37" cy="2.500" r="4" fill="#f9dc3a" stroke="#2a3f7a" stroke-width="1.200"/><path d="M9 3l4-1v6l-3 1z" fill="#e8f0fa"/>
 <text x="2" y="9" font-size="4" fill="#fff">JD</text>
 <path d="M1 15.500h28" stroke="#6f8fc8" stroke-width="1.400" stroke-dasharray="4 1.200"/>
 <!-- row 36: JD card -->
 <g transform="translate(0,20)"><rect x="0" y="0" width="43" height="42.500" rx="2.500" fill="#1f9bd8"/>
  <g fill="#5cbcea" opacity=".55"><rect x="3" y="9" width="20" height=".8"/><rect x="4" y="12.500" width="26" height=".8"/><rect x="3" y="16" width="17" height=".8"/><rect x="4" y="19.500" width="15" height=".8"/><rect x="3" y="23" width="17" height=".8"/><rect x="4" y="26.500" width="16" height=".8"/><rect x="3" y="30" width="18" height=".8"/><rect x="5" y="33.500" width="15" height=".8"/><rect x="24" y="9" width="16" height=".8"/><rect x="30" y="30" width="5" height=".8"/></g>
  <rect x="1.500" y="4" width="7.500" height="2.200" fill="#f2f8fc"/><path d="M1.500 5.100h7.500" stroke="#e04040" stroke-width=".7"/><rect x="29" y="4.500" width="8" height="1.600" rx=".8" fill="#8ad4f2"/><rect x="35" y="4.200" width="2" height="2.200" fill="#e86a5a"/>
  <text x="1.800" y="39.500" font-size="3" fill="#d8f0fb">VIO</text>
  <path d="M21.500 16.500l6.500 26" stroke="#fff" stroke-width="3" fill="none"/>
  <path d="M31.500 11.500l5 28.500" stroke="#fff" stroke-width="3" fill="none"/>
  <path d="M31 12.500c6-2 10 0 13 5" stroke="#fff" stroke-width="2.600" fill="none"/><path d="M36 39c3 0 6-1 8-3" stroke="#fff" stroke-width="2.400" fill="none"/>
 </g>
 <!-- row 35: bracelet -->
 <g transform="translate(0,62.800)"><text x="5" y="15.500" font-size="5.500" fill="#999">粗</text>
  <ellipse cx="22" cy="28" rx="16" ry="5.500" fill="none" stroke="#e0523c" stroke-width="1.500"/>
  <rect x="19" y="21" width="6" height="2.600" rx="1" fill="#4a3a2a"/>
  <path d="M18 32l2.300 3.400 2.300-3.400a2.300 2.300 0 0 0-4.600 0z" fill="#f0b820" stroke="#c88a10" stroke-width=".4"/><path d="M23.500 32l2.300 3.400 2.300-3.400a2.300 2.300 0 0 0-4.600 0z" fill="#f0b820" stroke="#c88a10" stroke-width=".4"/>
 </g>
 <!-- row 34: speaker -->
 <g transform="translate(0,112.800)">
  <rect x="0" y="3" width="43" height="41" fill="#fafafa"/>
  <rect x="3" y="12" width="5" height="18" rx="1.500" fill="#9a9a9a" transform="rotate(8 5 21)"/><rect x="35" y="12" width="5" height="18" rx="1.500" fill="#9a9a9a" transform="rotate(-8 37 21)"/>
  <path d="M11 25c0-14 21-14 21 0v3H11z" fill="#e4e4e4" stroke="#b0b0b0" stroke-width=".8"/><path d="M17 24c0-6 9-6 9 0v3h-9z" fill="#c8c8c8"/>
  <rect x="12" y="26" width="19" height="4.500" rx="1" fill="#3a3a3a"/><rect x="9" y="30" width="25" height="2" fill="#8a8a8a"/>
  <rect x="0" y="32.500" width="43" height="11.500" fill="#7fd8e8"/>
  <text x="1" y="37.800" font-size="5" font-weight="bold" font-style="italic" fill="#fff" stroke="#333" stroke-width=".25">SoundSticks</text>
  <text x="1" y="43" font-size="4.200" font-weight="bold" font-style="italic" fill="#fff" stroke="#356" stroke-width=".2">Wireless水晶音箱</text>
 </g>
 <!-- row 33: dashcam -->
 <g transform="translate(0,159.200)">
  <rect x="0" y="1" width="43" height="42" rx="2" fill="#c2e6f8"/>
  <rect x="12" y="3.500" width="18" height="1" fill="#8ab"/><rect x="14" y="5.500" width="14" height=".8" fill="#9bc"/>
  <rect x="10" y="10" width="24" height="15" rx="2.500" fill="#1c1c1c"/><circle cx="27" cy="17.500" r="4.800" fill="#3a3a3a" stroke="#aaa" stroke-width=".9"/><circle cx="27" cy="17.500" r="2" fill="#111"/><rect x="12.500" y="14" width="6" height="2" fill="#444"/>
  <path d="M2 28c6-3 14-4 20-3s14 0 19 2l-3 7H6z" fill="#6aa83a"/><path d="M5 31h33l-3 5.500H9z" fill="#8a6a3a"/>
  <path d="M9 26l2-3 2 3zM13 27l1.500-2.500 1.500 2.500z" fill="#5ab0e8"/>
  <text x="2" y="41.500" font-size="4.800" font-weight="bold" font-style="italic" fill="#fff" stroke="#246" stroke-width=".25">春季特卖第二波活动</text>
 </g>
 <!-- row 32: macbook -->
 <g transform="translate(0,205.600)">
  <rect x="0" y="1" width="43" height="43" fill="#fbfbfb"/>
  <rect x="3.500" y="5" width="36" height="25" rx="1.200" fill="#cfd2d6"/><rect x="5.500" y="7" width="32" height="21" fill="#5a86b4"/><path d="M5.500 28l9-11 7 6 7-9 9 8v6z" fill="#d8803a"/><path d="M5.500 28l9-7 7 3.500 7-6 9 4.500v5z" fill="#4a4458" opacity=".65"/><path d="M5.500 7h32v6c-10 2-22 2-32 0z" fill="#a8b8c8" opacity=".7"/>
  <path d="M1.500 31h40l-1.500 2.500H3z" fill="#b8bcc0"/><rect x="1" y="30" width="41" height="1.300" fill="#e4e6e8"/>
  <rect x="1" y="4" width="16" height="9" rx="1" fill="#f48aa4" opacity=".92" transform="rotate(-28 9 9)"/><text x="3" y="11.500" font-size="4.500" fill="#fff" transform="rotate(-28 9 9)">特惠</text>
  <path d="M0 36c8-4 18-1 26-3s12-1 17 0v11H0z" fill="#5fc8e4"/>
  <text x="2" y="38" font-size="4.500" font-weight="bold" font-style="italic" fill="#fff" stroke="#246" stroke-width=".25">新款</text>
  <text x="2" y="43" font-size="4.300" font-weight="bold" font-style="italic" fill="#fff" stroke="#246" stroke-width=".25">苹果笔记本超薄</text>
 </g>
 <!-- row 31: headphones -->
 <path d="M11.500 270c0-12 3.500-15.500 10-15.500s10 3.500 10 15.500" stroke="#1a1a1a" stroke-width="2" fill="none"/>
</svg>

</div></div>
<div class="abs" style="left:658.5px;top:199px;width:9.5px;height:268px;background:#f1f1f1"></div>
<div class="abs" style="left:660px;top:247.5px;width:6.5px;height:32px;background:#c1c1c1"></div>
<svg class="abs" style="left:658.5px;top:199px" width="10" height="268" viewBox="0 0 10 268"><path d="M3 7.5l1.800-2.300 1.800 2.300zM3 261.500l1.800 2.300 1.800-2.300z" fill="#505050"/></svg>
<div class="abs" style="left:144px;top:467px;width:514.5px;height:10px;background:#f1f1f1"></div>
<div class="abs" style="left:658.5px;top:467px;width:9.5px;height:10px;background:#dcdcdc"></div>
<div class="abs" style="left:153px;top:468.5px;width:468.5px;height:6.5px;background:#c1c1c1"></div>
<svg class="abs" style="left:144px;top:467px" width="515" height="10" viewBox="0 0 515 10"><path d="M6 2.800L3.700 4.700 6 6.600zM508 2.800l2.300 1.900-2.300 1.900z" fill="#505050"/></svg>
</div></div>
<div id="taskbar" class="abs" style="left:0;top:554px;width:1024px;height:6px;background:linear-gradient(180deg,#b8cce4 0,#9cb6d6 25%,#8eaacc 100%);border-top:1px solid #6a88b0;overflow:hidden">
<div class="abs" style="left:1px;top:1.500px;width:21px;height:21px;border-radius:11px;background:radial-gradient(circle at 50% 40%,#b8d8f4,#3a78c8 70%);border:1px solid #c8dcf0"></div>
<div class="abs" style="left:32px;top:0;width:31px;height:10px;background:linear-gradient(180deg,#e4edf7,#b9cce4);border:1px solid #eef3fa;border-radius:2px 2px 0 0;box-shadow:0 0 0 .6px #6f8fb8"></div>
<div class="abs" style="left:41.5px;top:2.500px;width:12px;height:10px;border-radius:6px 6px 0 0;background:#e8533a"></div>
<div class="abs" style="left:65px;top:0;width:31px;height:10px;background:linear-gradient(180deg,#e4edf7,#b9cce4);border:1px solid #eef3fa;border-radius:2px 2px 0 0;box-shadow:0 0 0 .6px #6f8fb8"></div>
<div class="abs" style="left:74.5px;top:2.500px;width:12px;height:10px;border-radius:6px 6px 0 0;background:#e6dcb0"></div>
<div class="abs" style="left:98.5px;top:0;width:31px;height:10px;background:linear-gradient(180deg,#e4edf7,#b9cce4);border:1px solid #eef3fa;border-radius:2px 2px 0 0;box-shadow:0 0 0 .6px #6f8fb8"></div>
<div class="abs" style="left:108px;top:2.500px;width:12px;height:10px;border-radius:6px 6px 0 0;background:#2a7fe8"></div>
<div class="abs" style="left:131.5px;top:0;width:31px;height:10px;background:linear-gradient(180deg,#e4edf7,#b9cce4);border:1px solid #eef3fa;border-radius:2px 2px 0 0;box-shadow:0 0 0 .6px #6f8fb8"></div>
<div class="abs" style="left:141px;top:2.500px;width:12px;height:10px;border-radius:6px 6px 0 0;background:#f4f4f4"></div>
<div class="abs" style="left:164.5px;top:0;width:31px;height:10px;background:linear-gradient(180deg,#e4edf7,#b9cce4);border:1px solid #eef3fa;border-radius:2px 2px 0 0;box-shadow:0 0 0 .6px #6f8fb8"></div>
<div class="abs" style="left:174px;top:2.500px;width:12px;height:10px;border-radius:6px 6px 0 0;background:#f7c21a"></div>
<div class="abs" style="left:893px;top:1px;font-size:5px;color:#fff;line-height:5px;font-weight:bold">12:11</div>
</div>
</body></html>
